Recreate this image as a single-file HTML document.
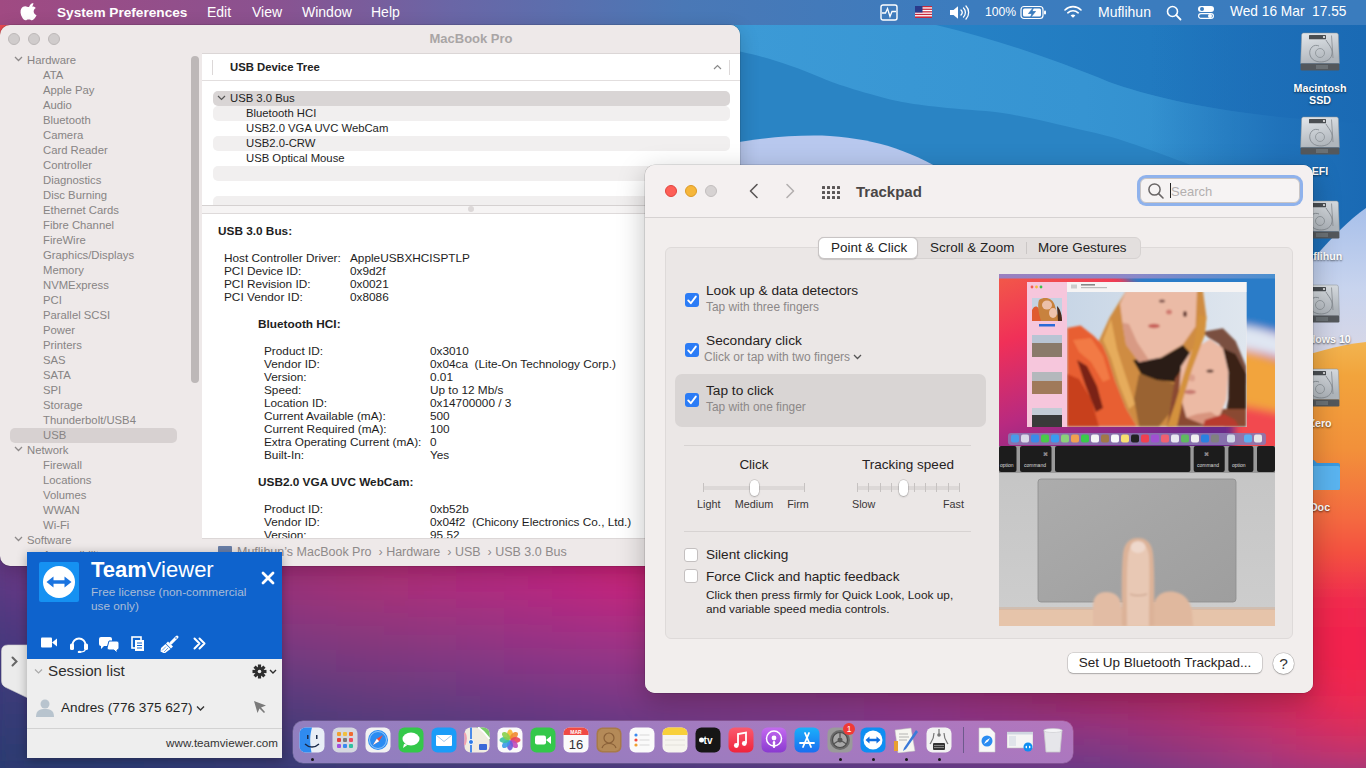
<!DOCTYPE html>
<html><head><meta charset="utf-8">
<style>
*{box-sizing:border-box;margin:0;padding:0}
html,body{width:1366px;height:768px;overflow:hidden}
body{position:relative;font-family:"Liberation Sans",sans-serif;background:#3a3a7a}
.abs{position:absolute}
.t{white-space:nowrap}
#wall{position:absolute;left:0;top:0;width:1366px;height:768px}
#menubar{position:absolute;left:0;top:0;width:1366px;height:25px;background:linear-gradient(90deg,#a04a82 0%,#8a5290 20%,#6a66a6 33%,#4a78b6 50%,#3c7cbe 70%,#3a7cbe 100%);color:#fff;font-size:14px}
#menubar span{position:absolute;top:4px;white-space:nowrap}
#si{position:absolute;left:0px;top:25px;width:740px;height:541px;border-radius:10px;background:#eee9e9;overflow:hidden;box-shadow:0 0 0 0.5px rgba(0,0,0,.2),0 6px 20px rgba(0,0,0,.2)}
#si .it,#si .sec{position:absolute;font-size:11.3px;line-height:14px;color:#878484;white-space:nowrap}
#si .chev{position:absolute}
#si .dt{position:absolute;font-size:11.8px;line-height:14px;color:#1e1e1e;white-space:nowrap}
#si .hd{font-size:11.3px;font-weight:bold;color:#222;line-height:14px}
#si .row{position:absolute;left:211px;width:517px;height:15px;border-radius:5px}
#si .sel{background:#d9d5d5}
#si .str{background:#f1efef}
#si .tr{position:absolute;font-size:11.3px;line-height:14px;color:#1e1e1e;white-space:nowrap}
.tl{position:absolute;width:12px;height:12px;border-radius:6px;background:#d0cccc;border:0.5px solid #bcb8b8}
#tp{position:absolute;left:645px;top:165px;width:668px;height:528px;border-radius:10px;background:#f1eded;overflow:hidden;box-shadow:0 0 0 0.5px rgba(0,0,0,.2),0 8px 28px rgba(0,0,0,.25)}
#tv{position:absolute;left:27px;top:552px;width:255px;height:206px;background:#eeeeee;box-shadow:0 2px 10px rgba(0,0,0,.3)}
#dock{position:absolute;left:293px;top:721px;width:780px;height:42px;border-radius:10px;background:linear-gradient(90deg,rgba(170,150,215,.75),rgba(190,140,210,.75));box-shadow:0 0 0 0.5px rgba(255,255,255,.25)}
.dl{width:120px;text-align:center;font-size:10.7px;font-weight:bold;line-height:14px;color:#fff;text-shadow:0 1px 2px rgba(0,0,0,.6);white-space:nowrap}
</style></head><body>
<svg id="wall" width="1366" height="768" viewBox="0 0 1366 768">
<defs>
<linearGradient id="ws" x1="0" y1="150" x2="0" y2="560" gradientUnits="userSpaceOnUse">
<stop offset="0" stop-color="#1a6cb8"/><stop offset=".12" stop-color="#1e70bc"/><stop offset=".2" stop-color="#a8c0ea"/><stop offset=".3" stop-color="#c8d2ec"/><stop offset=".46" stop-color="#d8d4e0"/><stop offset=".49" stop-color="#f2ac48"/><stop offset=".66" stop-color="#f2a03a"/><stop offset=".8" stop-color="#f47a3a"/><stop offset="1" stop-color="#f45a40"/>
</linearGradient>
<linearGradient id="wdr" x1="1150" y1="0" x2="1366" y2="0" gradientUnits="userSpaceOnUse"><stop offset="0" stop-color="#1c6cb6" stop-opacity="0"/><stop offset=".6" stop-color="#1c6cb6" stop-opacity=".8"/><stop offset="1" stop-color="#1a6ab4"/></linearGradient>
<linearGradient id="wlv" x1="0" y1="208" x2="0" y2="370" gradientUnits="userSpaceOnUse"><stop offset="0" stop-color="#a8c0ea"/><stop offset=".5" stop-color="#c8d4ee"/><stop offset="1" stop-color="#dcd8e4"/></linearGradient>
<linearGradient id="wor" x1="0" y1="342" x2="0" y2="600" gradientUnits="userSpaceOnUse"><stop offset="0" stop-color="#f2b450"/><stop offset=".13" stop-color="#f2a43c"/><stop offset=".42" stop-color="#f2903a"/><stop offset=".68" stop-color="#f46a40"/><stop offset=".82" stop-color="#f45040"/><stop offset="1" stop-color="#f23a4a" stop-opacity="0"/></linearGradient>
<linearGradient id="wtr" x1="936" y1="0" x2="1366" y2="0" gradientUnits="userSpaceOnUse"><stop offset="0" stop-color="#2682c6"/><stop offset="1" stop-color="#1c72ba"/></linearGradient>
<linearGradient id="wlb" x1="740" y1="0" x2="1366" y2="0" gradientUnits="userSpaceOnUse"><stop offset="0" stop-color="#3c9ad6"/><stop offset=".55" stop-color="#3694d2"/><stop offset="1" stop-color="#2c88c8"/></linearGradient>
<filter id="wbl" x="-10%" y="-10%" width="120%" height="120%"><feGaussianBlur stdDeviation="6"/></filter>
<filter id="wgb" x="0" y="0" width="1" height="1"><feGaussianBlur stdDeviation="16"/></filter>
</defs>
<rect width="1366" height="768" fill="#3a3a7a"/>
<g filter="url(#wgb)"><rect x="-24" y="408" width="24" height="24" fill="#7b3886"/><rect x="0" y="408" width="24" height="24" fill="#7e3685"/><rect x="24" y="408" width="24" height="24" fill="#813484"/><rect x="48" y="408" width="24" height="24" fill="#843382"/><rect x="72" y="408" width="24" height="24" fill="#883181"/><rect x="96" y="408" width="24" height="24" fill="#8c2f7f"/><rect x="120" y="408" width="24" height="24" fill="#912e7d"/><rect x="144" y="408" width="24" height="24" fill="#962d7b"/><rect x="168" y="408" width="24" height="24" fill="#9b2c7a"/><rect x="192" y="408" width="24" height="24" fill="#a12b78"/><rect x="216" y="408" width="24" height="24" fill="#a52b76"/><rect x="240" y="408" width="24" height="24" fill="#aa2a75"/><rect x="264" y="408" width="24" height="24" fill="#ae2a73"/><rect x="288" y="408" width="24" height="24" fill="#b22a72"/><rect x="312" y="408" width="24" height="24" fill="#b62a71"/><rect x="336" y="408" width="24" height="24" fill="#b92a70"/><rect x="360" y="408" width="24" height="24" fill="#bc2a70"/><rect x="384" y="408" width="24" height="24" fill="#bf2a6f"/><rect x="408" y="408" width="24" height="24" fill="#c2296f"/><rect x="432" y="408" width="24" height="24" fill="#c5286f"/><rect x="456" y="408" width="24" height="24" fill="#c8276e"/><rect x="480" y="408" width="24" height="24" fill="#ca266e"/><rect x="504" y="408" width="24" height="24" fill="#cc266d"/><rect x="528" y="408" width="24" height="24" fill="#ce256d"/><rect x="552" y="408" width="24" height="24" fill="#cf256c"/><rect x="576" y="408" width="24" height="24" fill="#d0266b"/><rect x="600" y="408" width="24" height="24" fill="#d0266a"/><rect x="624" y="408" width="24" height="24" fill="#d02769"/><rect x="648" y="408" width="24" height="24" fill="#d02868"/><rect x="672" y="408" width="24" height="24" fill="#cf2a68"/><rect x="696" y="408" width="24" height="24" fill="#cf2a67"/><rect x="720" y="408" width="24" height="24" fill="#d12b65"/><rect x="744" y="408" width="24" height="24" fill="#d32c64"/><rect x="768" y="408" width="24" height="24" fill="#d42c62"/><rect x="792" y="408" width="24" height="24" fill="#d62d61"/><rect x="816" y="408" width="24" height="24" fill="#d72e5f"/><rect x="840" y="408" width="24" height="24" fill="#d92f5d"/><rect x="864" y="408" width="24" height="24" fill="#da315b"/><rect x="888" y="408" width="24" height="24" fill="#db3359"/><rect x="912" y="408" width="24" height="24" fill="#dc3656"/><rect x="936" y="408" width="24" height="24" fill="#dd3954"/><rect x="960" y="408" width="24" height="24" fill="#de3d51"/><rect x="984" y="408" width="24" height="24" fill="#df414f"/><rect x="1008" y="408" width="24" height="24" fill="#e1474d"/><rect x="1032" y="408" width="24" height="24" fill="#e44e4a"/><rect x="1056" y="408" width="24" height="24" fill="#e65548"/><rect x="1080" y="408" width="24" height="24" fill="#e85d46"/><rect x="1104" y="408" width="24" height="24" fill="#ea6543"/><rect x="1128" y="408" width="24" height="24" fill="#ec6d41"/><rect x="1152" y="408" width="24" height="24" fill="#ed753f"/><rect x="1176" y="408" width="24" height="24" fill="#ee7c3d"/><rect x="1200" y="408" width="24" height="24" fill="#ef843b"/><rect x="1224" y="408" width="24" height="24" fill="#ef8a39"/><rect x="1248" y="408" width="24" height="24" fill="#ef8f38"/><rect x="1272" y="408" width="24" height="24" fill="#f09138"/><rect x="1296" y="408" width="24" height="24" fill="#f09338"/><rect x="1320" y="408" width="24" height="24" fill="#f19438"/><rect x="1344" y="408" width="24" height="24" fill="#f19439"/><rect x="1368" y="408" width="24" height="24" fill="#f29439"/><rect x="-24" y="432" width="24" height="24" fill="#793886"/><rect x="0" y="432" width="24" height="24" fill="#7c3685"/><rect x="24" y="432" width="24" height="24" fill="#803484"/><rect x="48" y="432" width="24" height="24" fill="#843282"/><rect x="72" y="432" width="24" height="24" fill="#873081"/><rect x="96" y="432" width="24" height="24" fill="#8c2f7f"/><rect x="120" y="432" width="24" height="24" fill="#912d7d"/><rect x="144" y="432" width="24" height="24" fill="#962c7b"/><rect x="168" y="432" width="24" height="24" fill="#9b2b7a"/><rect x="192" y="432" width="24" height="24" fill="#a02b78"/><rect x="216" y="432" width="24" height="24" fill="#a52a76"/><rect x="240" y="432" width="24" height="24" fill="#a92a75"/><rect x="264" y="432" width="24" height="24" fill="#ae2973"/><rect x="288" y="432" width="24" height="24" fill="#b22972"/><rect x="312" y="432" width="24" height="24" fill="#b62971"/><rect x="336" y="432" width="24" height="24" fill="#ba2a70"/><rect x="360" y="432" width="24" height="24" fill="#bd296f"/><rect x="384" y="432" width="24" height="24" fill="#c0296f"/><rect x="408" y="432" width="24" height="24" fill="#c3286f"/><rect x="432" y="432" width="24" height="24" fill="#c6276f"/><rect x="456" y="432" width="24" height="24" fill="#c8266f"/><rect x="480" y="432" width="24" height="24" fill="#cb256f"/><rect x="504" y="432" width="24" height="24" fill="#cd246f"/><rect x="528" y="432" width="24" height="24" fill="#ce246e"/><rect x="552" y="432" width="24" height="24" fill="#d0236d"/><rect x="576" y="432" width="24" height="24" fill="#d1246c"/><rect x="600" y="432" width="24" height="24" fill="#d2256b"/><rect x="624" y="432" width="24" height="24" fill="#d2266a"/><rect x="648" y="432" width="24" height="24" fill="#d22769"/><rect x="672" y="432" width="24" height="24" fill="#d22868"/><rect x="696" y="432" width="24" height="24" fill="#d22967"/><rect x="720" y="432" width="24" height="24" fill="#d32a66"/><rect x="744" y="432" width="24" height="24" fill="#d42a65"/><rect x="768" y="432" width="24" height="24" fill="#d62a64"/><rect x="792" y="432" width="24" height="24" fill="#d72a63"/><rect x="816" y="432" width="24" height="24" fill="#d82b62"/><rect x="840" y="432" width="24" height="24" fill="#da2b60"/><rect x="864" y="432" width="24" height="24" fill="#db2d5e"/><rect x="888" y="432" width="24" height="24" fill="#dc2f5b"/><rect x="912" y="432" width="24" height="24" fill="#dd3159"/><rect x="936" y="432" width="24" height="24" fill="#df3456"/><rect x="960" y="432" width="24" height="24" fill="#e03753"/><rect x="984" y="432" width="24" height="24" fill="#e13c51"/><rect x="1008" y="432" width="24" height="24" fill="#e3414e"/><rect x="1032" y="432" width="24" height="24" fill="#e6474c"/><rect x="1056" y="432" width="24" height="24" fill="#e84e4a"/><rect x="1080" y="432" width="24" height="24" fill="#ea5548"/><rect x="1104" y="432" width="24" height="24" fill="#ec5c46"/><rect x="1128" y="432" width="24" height="24" fill="#ed6344"/><rect x="1152" y="432" width="24" height="24" fill="#ee6b42"/><rect x="1176" y="432" width="24" height="24" fill="#ef7240"/><rect x="1200" y="432" width="24" height="24" fill="#f0783e"/><rect x="1224" y="432" width="24" height="24" fill="#f07e3c"/><rect x="1248" y="432" width="24" height="24" fill="#f0823b"/><rect x="1272" y="432" width="24" height="24" fill="#f1853a"/><rect x="1296" y="432" width="24" height="24" fill="#f1863a"/><rect x="1320" y="432" width="24" height="24" fill="#f18739"/><rect x="1344" y="432" width="24" height="24" fill="#f28839"/><rect x="1368" y="432" width="24" height="24" fill="#f38839"/><rect x="-24" y="456" width="24" height="24" fill="#763887"/><rect x="0" y="456" width="24" height="24" fill="#7b3686"/><rect x="24" y="456" width="24" height="24" fill="#7f3484"/><rect x="48" y="456" width="24" height="24" fill="#843283"/><rect x="72" y="456" width="24" height="24" fill="#883081"/><rect x="96" y="456" width="24" height="24" fill="#8d2e7f"/><rect x="120" y="456" width="24" height="24" fill="#912d7d"/><rect x="144" y="456" width="24" height="24" fill="#962c7c"/><rect x="168" y="456" width="24" height="24" fill="#9b2b7a"/><rect x="192" y="456" width="24" height="24" fill="#9f2a78"/><rect x="216" y="456" width="24" height="24" fill="#a42a77"/><rect x="240" y="456" width="24" height="24" fill="#a82975"/><rect x="264" y="456" width="24" height="24" fill="#ad2973"/><rect x="288" y="456" width="24" height="24" fill="#b12972"/><rect x="312" y="456" width="24" height="24" fill="#b62971"/><rect x="336" y="456" width="24" height="24" fill="#ba2970"/><rect x="360" y="456" width="24" height="24" fill="#be296f"/><rect x="384" y="456" width="24" height="24" fill="#c1296f"/><rect x="408" y="456" width="24" height="24" fill="#c4286f"/><rect x="432" y="456" width="24" height="24" fill="#c6266f"/><rect x="456" y="456" width="24" height="24" fill="#c82570"/><rect x="480" y="456" width="24" height="24" fill="#ca2470"/><rect x="504" y="456" width="24" height="24" fill="#cc2370"/><rect x="528" y="456" width="24" height="24" fill="#ce2270"/><rect x="552" y="456" width="24" height="24" fill="#d0226f"/><rect x="576" y="456" width="24" height="24" fill="#d2226d"/><rect x="600" y="456" width="24" height="24" fill="#d3236c"/><rect x="624" y="456" width="24" height="24" fill="#d4256a"/><rect x="648" y="456" width="24" height="24" fill="#d42669"/><rect x="672" y="456" width="24" height="24" fill="#d52867"/><rect x="696" y="456" width="24" height="24" fill="#d52966"/><rect x="720" y="456" width="24" height="24" fill="#d52966"/><rect x="744" y="456" width="24" height="24" fill="#d62866"/><rect x="768" y="456" width="24" height="24" fill="#d72866"/><rect x="792" y="456" width="24" height="24" fill="#d82865"/><rect x="816" y="456" width="24" height="24" fill="#d92864"/><rect x="840" y="456" width="24" height="24" fill="#da2863"/><rect x="864" y="456" width="24" height="24" fill="#dc2961"/><rect x="888" y="456" width="24" height="24" fill="#dd2b5e"/><rect x="912" y="456" width="24" height="24" fill="#df2d5b"/><rect x="936" y="456" width="24" height="24" fill="#e03058"/><rect x="960" y="456" width="24" height="24" fill="#e23355"/><rect x="984" y="456" width="24" height="24" fill="#e43753"/><rect x="1008" y="456" width="24" height="24" fill="#e63c50"/><rect x="1032" y="456" width="24" height="24" fill="#e8414e"/><rect x="1056" y="456" width="24" height="24" fill="#ea474d"/><rect x="1080" y="456" width="24" height="24" fill="#ec4d4b"/><rect x="1104" y="456" width="24" height="24" fill="#ed5349"/><rect x="1128" y="456" width="24" height="24" fill="#ef5a47"/><rect x="1152" y="456" width="24" height="24" fill="#f06045"/><rect x="1176" y="456" width="24" height="24" fill="#f06744"/><rect x="1200" y="456" width="24" height="24" fill="#f16c42"/><rect x="1224" y="456" width="24" height="24" fill="#f17040"/><rect x="1248" y="456" width="24" height="24" fill="#f1733f"/><rect x="1272" y="456" width="24" height="24" fill="#f1773d"/><rect x="1296" y="456" width="24" height="24" fill="#f2783c"/><rect x="1320" y="456" width="24" height="24" fill="#f27a3b"/><rect x="1344" y="456" width="24" height="24" fill="#f37a3a"/><rect x="1368" y="456" width="24" height="24" fill="#f47b3a"/><rect x="-24" y="480" width="24" height="24" fill="#733987"/><rect x="0" y="480" width="24" height="24" fill="#783786"/><rect x="24" y="480" width="24" height="24" fill="#7d3584"/><rect x="48" y="480" width="24" height="24" fill="#833283"/><rect x="72" y="480" width="24" height="24" fill="#883081"/><rect x="96" y="480" width="24" height="24" fill="#8d2e7f"/><rect x="120" y="480" width="24" height="24" fill="#912d7e"/><rect x="144" y="480" width="24" height="24" fill="#952c7c"/><rect x="168" y="480" width="24" height="24" fill="#992b7b"/><rect x="192" y="480" width="24" height="24" fill="#9d2b79"/><rect x="216" y="480" width="24" height="24" fill="#a22a77"/><rect x="240" y="480" width="24" height="24" fill="#a62975"/><rect x="264" y="480" width="24" height="24" fill="#ab2974"/><rect x="288" y="480" width="24" height="24" fill="#af2972"/><rect x="312" y="480" width="24" height="24" fill="#b42971"/><rect x="336" y="480" width="24" height="24" fill="#b92970"/><rect x="360" y="480" width="24" height="24" fill="#bd296f"/><rect x="384" y="480" width="24" height="24" fill="#c1296f"/><rect x="408" y="480" width="24" height="24" fill="#c4286f"/><rect x="432" y="480" width="24" height="24" fill="#c52670"/><rect x="456" y="480" width="24" height="24" fill="#c72571"/><rect x="480" y="480" width="24" height="24" fill="#c82372"/><rect x="504" y="480" width="24" height="24" fill="#ca2272"/><rect x="528" y="480" width="24" height="24" fill="#cd2172"/><rect x="552" y="480" width="24" height="24" fill="#cf2171"/><rect x="576" y="480" width="24" height="24" fill="#d1216f"/><rect x="600" y="480" width="24" height="24" fill="#d3226d"/><rect x="624" y="480" width="24" height="24" fill="#d5246b"/><rect x="648" y="480" width="24" height="24" fill="#d62669"/><rect x="672" y="480" width="24" height="24" fill="#d72867"/><rect x="696" y="480" width="24" height="24" fill="#d72966"/><rect x="720" y="480" width="24" height="24" fill="#d72967"/><rect x="744" y="480" width="24" height="24" fill="#d72867"/><rect x="768" y="480" width="24" height="24" fill="#d72668"/><rect x="792" y="480" width="24" height="24" fill="#d82668"/><rect x="816" y="480" width="24" height="24" fill="#d82568"/><rect x="840" y="480" width="24" height="24" fill="#da2666"/><rect x="864" y="480" width="24" height="24" fill="#db2764"/><rect x="888" y="480" width="24" height="24" fill="#dd2862"/><rect x="912" y="480" width="24" height="24" fill="#df2a5f"/><rect x="936" y="480" width="24" height="24" fill="#e22c5b"/><rect x="960" y="480" width="24" height="24" fill="#e42f58"/><rect x="984" y="480" width="24" height="24" fill="#e63355"/><rect x="1008" y="480" width="24" height="24" fill="#e83752"/><rect x="1032" y="480" width="24" height="24" fill="#ea3b51"/><rect x="1056" y="480" width="24" height="24" fill="#eb4050"/><rect x="1080" y="480" width="24" height="24" fill="#ed454e"/><rect x="1104" y="480" width="24" height="24" fill="#ee4b4c"/><rect x="1128" y="480" width="24" height="24" fill="#ef504b"/><rect x="1152" y="480" width="24" height="24" fill="#f05649"/><rect x="1176" y="480" width="24" height="24" fill="#f15b47"/><rect x="1200" y="480" width="24" height="24" fill="#f16045"/><rect x="1224" y="480" width="24" height="24" fill="#f26444"/><rect x="1248" y="480" width="24" height="24" fill="#f26742"/><rect x="1272" y="480" width="24" height="24" fill="#f26941"/><rect x="1296" y="480" width="24" height="24" fill="#f26a3f"/><rect x="1320" y="480" width="24" height="24" fill="#f36b3d"/><rect x="1344" y="480" width="24" height="24" fill="#f36b3c"/><rect x="1368" y="480" width="24" height="24" fill="#f46c3c"/><rect x="-24" y="504" width="24" height="24" fill="#6f3987"/><rect x="0" y="504" width="24" height="24" fill="#753886"/><rect x="24" y="504" width="24" height="24" fill="#7a3585"/><rect x="48" y="504" width="24" height="24" fill="#803383"/><rect x="72" y="504" width="24" height="24" fill="#863181"/><rect x="96" y="504" width="24" height="24" fill="#8b2f7f"/><rect x="120" y="504" width="24" height="24" fill="#8f2e7e"/><rect x="144" y="504" width="24" height="24" fill="#932d7d"/><rect x="168" y="504" width="24" height="24" fill="#972c7b"/><rect x="192" y="504" width="24" height="24" fill="#9a2b7a"/><rect x="216" y="504" width="24" height="24" fill="#9e2b78"/><rect x="240" y="504" width="24" height="24" fill="#a32a76"/><rect x="264" y="504" width="24" height="24" fill="#a72a74"/><rect x="288" y="504" width="24" height="24" fill="#ac2a73"/><rect x="312" y="504" width="24" height="24" fill="#b12a72"/><rect x="336" y="504" width="24" height="24" fill="#b62a71"/><rect x="360" y="504" width="24" height="24" fill="#bb2a70"/><rect x="384" y="504" width="24" height="24" fill="#bf296f"/><rect x="408" y="504" width="24" height="24" fill="#c12871"/><rect x="432" y="504" width="24" height="24" fill="#c22672"/><rect x="456" y="504" width="24" height="24" fill="#c32574"/><rect x="480" y="504" width="24" height="24" fill="#c52475"/><rect x="504" y="504" width="24" height="24" fill="#c72275"/><rect x="528" y="504" width="24" height="24" fill="#c92174"/><rect x="552" y="504" width="24" height="24" fill="#cc2173"/><rect x="576" y="504" width="24" height="24" fill="#cf2072"/><rect x="600" y="504" width="24" height="24" fill="#d22170"/><rect x="624" y="504" width="24" height="24" fill="#d4236d"/><rect x="648" y="504" width="24" height="24" fill="#d5256b"/><rect x="672" y="504" width="24" height="24" fill="#d72868"/><rect x="696" y="504" width="24" height="24" fill="#d72968"/><rect x="720" y="504" width="24" height="24" fill="#d72869"/><rect x="744" y="504" width="24" height="24" fill="#d6276a"/><rect x="768" y="504" width="24" height="24" fill="#d6256b"/><rect x="792" y="504" width="24" height="24" fill="#d6246c"/><rect x="816" y="504" width="24" height="24" fill="#d7246c"/><rect x="840" y="504" width="24" height="24" fill="#d8246a"/><rect x="864" y="504" width="24" height="24" fill="#da2569"/><rect x="888" y="504" width="24" height="24" fill="#dc2666"/><rect x="912" y="504" width="24" height="24" fill="#df2763"/><rect x="936" y="504" width="24" height="24" fill="#e12a5f"/><rect x="960" y="504" width="24" height="24" fill="#e42c5b"/><rect x="984" y="504" width="24" height="24" fill="#e72f58"/><rect x="1008" y="504" width="24" height="24" fill="#e93356"/><rect x="1032" y="504" width="24" height="24" fill="#ea3654"/><rect x="1056" y="504" width="24" height="24" fill="#ec3a53"/><rect x="1080" y="504" width="24" height="24" fill="#ed3e52"/><rect x="1104" y="504" width="24" height="24" fill="#ee4250"/><rect x="1128" y="504" width="24" height="24" fill="#ef474e"/><rect x="1152" y="504" width="24" height="24" fill="#f04c4c"/><rect x="1176" y="504" width="24" height="24" fill="#f1504b"/><rect x="1200" y="504" width="24" height="24" fill="#f15549"/><rect x="1224" y="504" width="24" height="24" fill="#f25948"/><rect x="1248" y="504" width="24" height="24" fill="#f25b46"/><rect x="1272" y="504" width="24" height="24" fill="#f25b44"/><rect x="1296" y="504" width="24" height="24" fill="#f35b43"/><rect x="1320" y="504" width="24" height="24" fill="#f35b41"/><rect x="1344" y="504" width="24" height="24" fill="#f35c3f"/><rect x="1368" y="504" width="24" height="24" fill="#f45c3f"/><rect x="-24" y="528" width="24" height="24" fill="#6a3a86"/><rect x="0" y="528" width="24" height="24" fill="#703986"/><rect x="24" y="528" width="24" height="24" fill="#753684"/><rect x="48" y="528" width="24" height="24" fill="#7b3483"/><rect x="72" y="528" width="24" height="24" fill="#813281"/><rect x="96" y="528" width="24" height="24" fill="#863080"/><rect x="120" y="528" width="24" height="24" fill="#8b2f7f"/><rect x="144" y="528" width="24" height="24" fill="#8e2e7d"/><rect x="168" y="528" width="24" height="24" fill="#922e7c"/><rect x="192" y="528" width="24" height="24" fill="#962d7b"/><rect x="216" y="528" width="24" height="24" fill="#992c79"/><rect x="240" y="528" width="24" height="24" fill="#9d2b77"/><rect x="264" y="528" width="24" height="24" fill="#a22b76"/><rect x="288" y="528" width="24" height="24" fill="#a72b74"/><rect x="312" y="528" width="24" height="24" fill="#ab2b73"/><rect x="336" y="528" width="24" height="24" fill="#b12b72"/><rect x="360" y="528" width="24" height="24" fill="#b52b72"/><rect x="384" y="528" width="24" height="24" fill="#b92b72"/><rect x="408" y="528" width="24" height="24" fill="#bb2973"/><rect x="432" y="528" width="24" height="24" fill="#bc2875"/><rect x="456" y="528" width="24" height="24" fill="#bd2677"/><rect x="480" y="528" width="24" height="24" fill="#bf2578"/><rect x="504" y="528" width="24" height="24" fill="#c12378"/><rect x="528" y="528" width="24" height="24" fill="#c42278"/><rect x="552" y="528" width="24" height="24" fill="#c72177"/><rect x="576" y="528" width="24" height="24" fill="#cb2175"/><rect x="600" y="528" width="24" height="24" fill="#ce2173"/><rect x="624" y="528" width="24" height="24" fill="#d02271"/><rect x="648" y="528" width="24" height="24" fill="#d2256e"/><rect x="672" y="528" width="24" height="24" fill="#d3286c"/><rect x="696" y="528" width="24" height="24" fill="#d4296c"/><rect x="720" y="528" width="24" height="24" fill="#d3286d"/><rect x="744" y="528" width="24" height="24" fill="#d2276e"/><rect x="768" y="528" width="24" height="24" fill="#d22570"/><rect x="792" y="528" width="24" height="24" fill="#d22371"/><rect x="816" y="528" width="24" height="24" fill="#d32370"/><rect x="840" y="528" width="24" height="24" fill="#d5236f"/><rect x="864" y="528" width="24" height="24" fill="#d7246d"/><rect x="888" y="528" width="24" height="24" fill="#d9246b"/><rect x="912" y="528" width="24" height="24" fill="#dc2667"/><rect x="936" y="528" width="24" height="24" fill="#df2764"/><rect x="960" y="528" width="24" height="24" fill="#e22960"/><rect x="984" y="528" width="24" height="24" fill="#e52c5c"/><rect x="1008" y="528" width="24" height="24" fill="#e72e5a"/><rect x="1032" y="528" width="24" height="24" fill="#e93159"/><rect x="1056" y="528" width="24" height="24" fill="#ea3457"/><rect x="1080" y="528" width="24" height="24" fill="#ec3756"/><rect x="1104" y="528" width="24" height="24" fill="#ed3a54"/><rect x="1128" y="528" width="24" height="24" fill="#ee3e52"/><rect x="1152" y="528" width="24" height="24" fill="#ef4150"/><rect x="1176" y="528" width="24" height="24" fill="#f0454e"/><rect x="1200" y="528" width="24" height="24" fill="#f1484c"/><rect x="1224" y="528" width="24" height="24" fill="#f24b4b"/><rect x="1248" y="528" width="24" height="24" fill="#f24c49"/><rect x="1272" y="528" width="24" height="24" fill="#f24c48"/><rect x="1296" y="528" width="24" height="24" fill="#f24b46"/><rect x="1320" y="528" width="24" height="24" fill="#f24b45"/><rect x="1344" y="528" width="24" height="24" fill="#f24b44"/><rect x="1368" y="528" width="24" height="24" fill="#f34d44"/><rect x="-24" y="552" width="24" height="24" fill="#623a85"/><rect x="0" y="552" width="24" height="24" fill="#683985"/><rect x="24" y="552" width="24" height="24" fill="#6e3784"/><rect x="48" y="552" width="24" height="24" fill="#733582"/><rect x="72" y="552" width="24" height="24" fill="#793481"/><rect x="96" y="552" width="24" height="24" fill="#7f3280"/><rect x="120" y="552" width="24" height="24" fill="#84317f"/><rect x="144" y="552" width="24" height="24" fill="#88307e"/><rect x="168" y="552" width="24" height="24" fill="#8c2f7d"/><rect x="192" y="552" width="24" height="24" fill="#8f2f7c"/><rect x="216" y="552" width="24" height="24" fill="#932e7b"/><rect x="240" y="552" width="24" height="24" fill="#972d79"/><rect x="264" y="552" width="24" height="24" fill="#9b2d77"/><rect x="288" y="552" width="24" height="24" fill="#9f2d76"/><rect x="312" y="552" width="24" height="24" fill="#a42d76"/><rect x="336" y="552" width="24" height="24" fill="#a92e75"/><rect x="360" y="552" width="24" height="24" fill="#ad2d75"/><rect x="384" y="552" width="24" height="24" fill="#b02d76"/><rect x="408" y="552" width="24" height="24" fill="#b22b77"/><rect x="432" y="552" width="24" height="24" fill="#b32a79"/><rect x="456" y="552" width="24" height="24" fill="#b5287a"/><rect x="480" y="552" width="24" height="24" fill="#b7277b"/><rect x="504" y="552" width="24" height="24" fill="#ba267b"/><rect x="528" y="552" width="24" height="24" fill="#bd257b"/><rect x="552" y="552" width="24" height="24" fill="#c0237a"/><rect x="576" y="552" width="24" height="24" fill="#c42279"/><rect x="600" y="552" width="24" height="24" fill="#c72277"/><rect x="624" y="552" width="24" height="24" fill="#ca2375"/><rect x="648" y="552" width="24" height="24" fill="#cb2673"/><rect x="672" y="552" width="24" height="24" fill="#cc2872"/><rect x="696" y="552" width="24" height="24" fill="#cd2971"/><rect x="720" y="552" width="24" height="24" fill="#cd2972"/><rect x="744" y="552" width="24" height="24" fill="#cc2774"/><rect x="768" y="552" width="24" height="24" fill="#cc2575"/><rect x="792" y="552" width="24" height="24" fill="#cd2476"/><rect x="816" y="552" width="24" height="24" fill="#ce2376"/><rect x="840" y="552" width="24" height="24" fill="#cf2374"/><rect x="864" y="552" width="24" height="24" fill="#d22472"/><rect x="888" y="552" width="24" height="24" fill="#d42470"/><rect x="912" y="552" width="24" height="24" fill="#d7256d"/><rect x="936" y="552" width="24" height="24" fill="#da2669"/><rect x="960" y="552" width="24" height="24" fill="#dd2765"/><rect x="984" y="552" width="24" height="24" fill="#e02962"/><rect x="1008" y="552" width="24" height="24" fill="#e32b5f"/><rect x="1032" y="552" width="24" height="24" fill="#e52d5d"/><rect x="1056" y="552" width="24" height="24" fill="#e62e5c"/><rect x="1080" y="552" width="24" height="24" fill="#e8315a"/><rect x="1104" y="552" width="24" height="24" fill="#ea3358"/><rect x="1128" y="552" width="24" height="24" fill="#eb3556"/><rect x="1152" y="552" width="24" height="24" fill="#ed3853"/><rect x="1176" y="552" width="24" height="24" fill="#ee3a51"/><rect x="1200" y="552" width="24" height="24" fill="#f03b4f"/><rect x="1224" y="552" width="24" height="24" fill="#f13c4d"/><rect x="1248" y="552" width="24" height="24" fill="#f23d4c"/><rect x="1272" y="552" width="24" height="24" fill="#f23d4b"/><rect x="1296" y="552" width="24" height="24" fill="#f23c4a"/><rect x="1320" y="552" width="24" height="24" fill="#f23c49"/><rect x="1344" y="552" width="24" height="24" fill="#f13c49"/><rect x="1368" y="552" width="24" height="24" fill="#f23e49"/><rect x="-24" y="576" width="24" height="24" fill="#593b83"/><rect x="0" y="576" width="24" height="24" fill="#5e3983"/><rect x="24" y="576" width="24" height="24" fill="#643882"/><rect x="48" y="576" width="24" height="24" fill="#6a3681"/><rect x="72" y="576" width="24" height="24" fill="#703581"/><rect x="96" y="576" width="24" height="24" fill="#763480"/><rect x="120" y="576" width="24" height="24" fill="#7b3380"/><rect x="144" y="576" width="24" height="24" fill="#7f327f"/><rect x="168" y="576" width="24" height="24" fill="#83327e"/><rect x="192" y="576" width="24" height="24" fill="#87317d"/><rect x="216" y="576" width="24" height="24" fill="#8a317c"/><rect x="240" y="576" width="24" height="24" fill="#8e317b"/><rect x="264" y="576" width="24" height="24" fill="#92307a"/><rect x="288" y="576" width="24" height="24" fill="#973079"/><rect x="312" y="576" width="24" height="24" fill="#9b3079"/><rect x="336" y="576" width="24" height="24" fill="#9f3178"/><rect x="360" y="576" width="24" height="24" fill="#a23078"/><rect x="384" y="576" width="24" height="24" fill="#a53079"/><rect x="408" y="576" width="24" height="24" fill="#a72f7a"/><rect x="432" y="576" width="24" height="24" fill="#a92d7c"/><rect x="456" y="576" width="24" height="24" fill="#ab2c7d"/><rect x="480" y="576" width="24" height="24" fill="#ad2b7e"/><rect x="504" y="576" width="24" height="24" fill="#b02a7f"/><rect x="528" y="576" width="24" height="24" fill="#b3287f"/><rect x="552" y="576" width="24" height="24" fill="#b6277e"/><rect x="576" y="576" width="24" height="24" fill="#ba267d"/><rect x="600" y="576" width="24" height="24" fill="#be257c"/><rect x="624" y="576" width="24" height="24" fill="#c0267b"/><rect x="648" y="576" width="24" height="24" fill="#c22979"/><rect x="672" y="576" width="24" height="24" fill="#c32a78"/><rect x="696" y="576" width="24" height="24" fill="#c32b77"/><rect x="720" y="576" width="24" height="24" fill="#c42b78"/><rect x="744" y="576" width="24" height="24" fill="#c42979"/><rect x="768" y="576" width="24" height="24" fill="#c4287a"/><rect x="792" y="576" width="24" height="24" fill="#c5267b"/><rect x="816" y="576" width="24" height="24" fill="#c6267b"/><rect x="840" y="576" width="24" height="24" fill="#c8267a"/><rect x="864" y="576" width="24" height="24" fill="#ca2578"/><rect x="888" y="576" width="24" height="24" fill="#cd2575"/><rect x="912" y="576" width="24" height="24" fill="#d02572"/><rect x="936" y="576" width="24" height="24" fill="#d4256f"/><rect x="960" y="576" width="24" height="24" fill="#d6266b"/><rect x="984" y="576" width="24" height="24" fill="#d92768"/><rect x="1008" y="576" width="24" height="24" fill="#dc2865"/><rect x="1032" y="576" width="24" height="24" fill="#de2962"/><rect x="1056" y="576" width="24" height="24" fill="#e02a60"/><rect x="1080" y="576" width="24" height="24" fill="#e22b5e"/><rect x="1104" y="576" width="24" height="24" fill="#e42d5c"/><rect x="1128" y="576" width="24" height="24" fill="#e62e59"/><rect x="1152" y="576" width="24" height="24" fill="#e82f56"/><rect x="1176" y="576" width="24" height="24" fill="#ea3053"/><rect x="1200" y="576" width="24" height="24" fill="#ed3051"/><rect x="1224" y="576" width="24" height="24" fill="#ef304f"/><rect x="1248" y="576" width="24" height="24" fill="#f12f4e"/><rect x="1272" y="576" width="24" height="24" fill="#f22f4d"/><rect x="1296" y="576" width="24" height="24" fill="#f22f4c"/><rect x="1320" y="576" width="24" height="24" fill="#f12f4d"/><rect x="1344" y="576" width="24" height="24" fill="#f02f4d"/><rect x="1368" y="576" width="24" height="24" fill="#f1314d"/><rect x="-24" y="600" width="24" height="24" fill="#503a81"/><rect x="0" y="600" width="24" height="24" fill="#543980"/><rect x="24" y="600" width="24" height="24" fill="#593880"/><rect x="48" y="600" width="24" height="24" fill="#5f3780"/><rect x="72" y="600" width="24" height="24" fill="#653680"/><rect x="96" y="600" width="24" height="24" fill="#6b357f"/><rect x="120" y="600" width="24" height="24" fill="#70357f"/><rect x="144" y="600" width="24" height="24" fill="#75347f"/><rect x="168" y="600" width="24" height="24" fill="#78347f"/><rect x="192" y="600" width="24" height="24" fill="#7c347e"/><rect x="216" y="600" width="24" height="24" fill="#80347e"/><rect x="240" y="600" width="24" height="24" fill="#84347d"/><rect x="264" y="600" width="24" height="24" fill="#89347d"/><rect x="288" y="600" width="24" height="24" fill="#8d357c"/><rect x="312" y="600" width="24" height="24" fill="#90347c"/><rect x="336" y="600" width="24" height="24" fill="#93347b"/><rect x="360" y="600" width="24" height="24" fill="#96347b"/><rect x="384" y="600" width="24" height="24" fill="#99337c"/><rect x="408" y="600" width="24" height="24" fill="#9b337d"/><rect x="432" y="600" width="24" height="24" fill="#9d327f"/><rect x="456" y="600" width="24" height="24" fill="#9f3180"/><rect x="480" y="600" width="24" height="24" fill="#a23081"/><rect x="504" y="600" width="24" height="24" fill="#a42e81"/><rect x="528" y="600" width="24" height="24" fill="#a72d82"/><rect x="552" y="600" width="24" height="24" fill="#aa2c82"/><rect x="576" y="600" width="24" height="24" fill="#ad2c82"/><rect x="600" y="600" width="24" height="24" fill="#b02c81"/><rect x="624" y="600" width="24" height="24" fill="#b32c80"/><rect x="648" y="600" width="24" height="24" fill="#b52d7e"/><rect x="672" y="600" width="24" height="24" fill="#b62e7d"/><rect x="696" y="600" width="24" height="24" fill="#b82e7d"/><rect x="720" y="600" width="24" height="24" fill="#b82e7d"/><rect x="744" y="600" width="24" height="24" fill="#b92d7e"/><rect x="768" y="600" width="24" height="24" fill="#ba2c7f"/><rect x="792" y="600" width="24" height="24" fill="#bb2b80"/><rect x="816" y="600" width="24" height="24" fill="#bd2a7f"/><rect x="840" y="600" width="24" height="24" fill="#bf297e"/><rect x="864" y="600" width="24" height="24" fill="#c1287c"/><rect x="888" y="600" width="24" height="24" fill="#c4287a"/><rect x="912" y="600" width="24" height="24" fill="#c72778"/><rect x="936" y="600" width="24" height="24" fill="#ca2774"/><rect x="960" y="600" width="24" height="24" fill="#cd2771"/><rect x="984" y="600" width="24" height="24" fill="#d0276d"/><rect x="1008" y="600" width="24" height="24" fill="#d22769"/><rect x="1032" y="600" width="24" height="24" fill="#d52766"/><rect x="1056" y="600" width="24" height="24" fill="#d72763"/><rect x="1080" y="600" width="24" height="24" fill="#da2861"/><rect x="1104" y="600" width="24" height="24" fill="#dc285e"/><rect x="1128" y="600" width="24" height="24" fill="#df295b"/><rect x="1152" y="600" width="24" height="24" fill="#e12958"/><rect x="1176" y="600" width="24" height="24" fill="#e42955"/><rect x="1200" y="600" width="24" height="24" fill="#e72953"/><rect x="1224" y="600" width="24" height="24" fill="#eb2751"/><rect x="1248" y="600" width="24" height="24" fill="#ee264f"/><rect x="1272" y="600" width="24" height="24" fill="#ef274e"/><rect x="1296" y="600" width="24" height="24" fill="#f1264d"/><rect x="1320" y="600" width="24" height="24" fill="#f1264e"/><rect x="1344" y="600" width="24" height="24" fill="#f1264f"/><rect x="1368" y="600" width="24" height="24" fill="#f2294e"/><rect x="-24" y="624" width="24" height="24" fill="#483a7e"/><rect x="0" y="624" width="24" height="24" fill="#4b397e"/><rect x="24" y="624" width="24" height="24" fill="#50397e"/><rect x="48" y="624" width="24" height="24" fill="#55387e"/><rect x="72" y="624" width="24" height="24" fill="#5b377e"/><rect x="96" y="624" width="24" height="24" fill="#5f377e"/><rect x="120" y="624" width="24" height="24" fill="#64367e"/><rect x="144" y="624" width="24" height="24" fill="#68367e"/><rect x="168" y="624" width="24" height="24" fill="#6c367e"/><rect x="192" y="624" width="24" height="24" fill="#70367e"/><rect x="216" y="624" width="24" height="24" fill="#74377e"/><rect x="240" y="624" width="24" height="24" fill="#78377e"/><rect x="264" y="624" width="24" height="24" fill="#7d387f"/><rect x="288" y="624" width="24" height="24" fill="#81387f"/><rect x="312" y="624" width="24" height="24" fill="#84387e"/><rect x="336" y="624" width="24" height="24" fill="#86377d"/><rect x="360" y="624" width="24" height="24" fill="#89377d"/><rect x="384" y="624" width="24" height="24" fill="#8b377e"/><rect x="408" y="624" width="24" height="24" fill="#8e377f"/><rect x="432" y="624" width="24" height="24" fill="#903780"/><rect x="456" y="624" width="24" height="24" fill="#923682"/><rect x="480" y="624" width="24" height="24" fill="#943482"/><rect x="504" y="624" width="24" height="24" fill="#973383"/><rect x="528" y="624" width="24" height="24" fill="#993284"/><rect x="552" y="624" width="24" height="24" fill="#9c3184"/><rect x="576" y="624" width="24" height="24" fill="#9f3185"/><rect x="600" y="624" width="24" height="24" fill="#a13285"/><rect x="624" y="624" width="24" height="24" fill="#a43284"/><rect x="648" y="624" width="24" height="24" fill="#a63283"/><rect x="672" y="624" width="24" height="24" fill="#a83281"/><rect x="696" y="624" width="24" height="24" fill="#aa3281"/><rect x="720" y="624" width="24" height="24" fill="#ab3181"/><rect x="744" y="624" width="24" height="24" fill="#ac3182"/><rect x="768" y="624" width="24" height="24" fill="#ae3183"/><rect x="792" y="624" width="24" height="24" fill="#af3084"/><rect x="816" y="624" width="24" height="24" fill="#b12f83"/><rect x="840" y="624" width="24" height="24" fill="#b32d82"/><rect x="864" y="624" width="24" height="24" fill="#b62c81"/><rect x="888" y="624" width="24" height="24" fill="#b92b7f"/><rect x="912" y="624" width="24" height="24" fill="#bc2a7c"/><rect x="936" y="624" width="24" height="24" fill="#bf297a"/><rect x="960" y="624" width="24" height="24" fill="#c12976"/><rect x="984" y="624" width="24" height="24" fill="#c42872"/><rect x="1008" y="624" width="24" height="24" fill="#c7286e"/><rect x="1032" y="624" width="24" height="24" fill="#c9276a"/><rect x="1056" y="624" width="24" height="24" fill="#cc2666"/><rect x="1080" y="624" width="24" height="24" fill="#cf2663"/><rect x="1104" y="624" width="24" height="24" fill="#d12660"/><rect x="1128" y="624" width="24" height="24" fill="#d4265d"/><rect x="1152" y="624" width="24" height="24" fill="#d7265a"/><rect x="1176" y="624" width="24" height="24" fill="#db2658"/><rect x="1200" y="624" width="24" height="24" fill="#df2555"/><rect x="1224" y="624" width="24" height="24" fill="#e32452"/><rect x="1248" y="624" width="24" height="24" fill="#e82350"/><rect x="1272" y="624" width="24" height="24" fill="#eb234e"/><rect x="1296" y="624" width="24" height="24" fill="#ef224e"/><rect x="1320" y="624" width="24" height="24" fill="#f1234e"/><rect x="1344" y="624" width="24" height="24" fill="#f3234e"/><rect x="1368" y="624" width="24" height="24" fill="#f4264e"/><rect x="-24" y="648" width="24" height="24" fill="#413a7c"/><rect x="0" y="648" width="24" height="24" fill="#443a7c"/><rect x="24" y="648" width="24" height="24" fill="#48397c"/><rect x="48" y="648" width="24" height="24" fill="#4c397c"/><rect x="72" y="648" width="24" height="24" fill="#50387c"/><rect x="96" y="648" width="24" height="24" fill="#54387c"/><rect x="120" y="648" width="24" height="24" fill="#58387d"/><rect x="144" y="648" width="24" height="24" fill="#5b387d"/><rect x="168" y="648" width="24" height="24" fill="#5f387d"/><rect x="192" y="648" width="24" height="24" fill="#63387d"/><rect x="216" y="648" width="24" height="24" fill="#67397e"/><rect x="240" y="648" width="24" height="24" fill="#6b397e"/><rect x="264" y="648" width="24" height="24" fill="#6f3a7f"/><rect x="288" y="648" width="24" height="24" fill="#723a7f"/><rect x="312" y="648" width="24" height="24" fill="#753a7e"/><rect x="336" y="648" width="24" height="24" fill="#78397e"/><rect x="360" y="648" width="24" height="24" fill="#7a397e"/><rect x="384" y="648" width="24" height="24" fill="#7d397f"/><rect x="408" y="648" width="24" height="24" fill="#7f3980"/><rect x="432" y="648" width="24" height="24" fill="#813981"/><rect x="456" y="648" width="24" height="24" fill="#833982"/><rect x="480" y="648" width="24" height="24" fill="#853783"/><rect x="504" y="648" width="24" height="24" fill="#883684"/><rect x="528" y="648" width="24" height="24" fill="#8a3585"/><rect x="552" y="648" width="24" height="24" fill="#8d3585"/><rect x="576" y="648" width="24" height="24" fill="#8f3586"/><rect x="600" y="648" width="24" height="24" fill="#923686"/><rect x="624" y="648" width="24" height="24" fill="#943686"/><rect x="648" y="648" width="24" height="24" fill="#973585"/><rect x="672" y="648" width="24" height="24" fill="#993584"/><rect x="696" y="648" width="24" height="24" fill="#9b3584"/><rect x="720" y="648" width="24" height="24" fill="#9c3584"/><rect x="744" y="648" width="24" height="24" fill="#9e3585"/><rect x="768" y="648" width="24" height="24" fill="#a03586"/><rect x="792" y="648" width="24" height="24" fill="#a13586"/><rect x="816" y="648" width="24" height="24" fill="#a33386"/><rect x="840" y="648" width="24" height="24" fill="#a63185"/><rect x="864" y="648" width="24" height="24" fill="#a83084"/><rect x="888" y="648" width="24" height="24" fill="#ab2f82"/><rect x="912" y="648" width="24" height="24" fill="#ae2e80"/><rect x="936" y="648" width="24" height="24" fill="#b12d7e"/><rect x="960" y="648" width="24" height="24" fill="#b42c7b"/><rect x="984" y="648" width="24" height="24" fill="#b62b77"/><rect x="1008" y="648" width="24" height="24" fill="#b92a73"/><rect x="1032" y="648" width="24" height="24" fill="#bb286e"/><rect x="1056" y="648" width="24" height="24" fill="#be2769"/><rect x="1080" y="648" width="24" height="24" fill="#c12665"/><rect x="1104" y="648" width="24" height="24" fill="#c42562"/><rect x="1128" y="648" width="24" height="24" fill="#c82660"/><rect x="1152" y="648" width="24" height="24" fill="#cb265e"/><rect x="1176" y="648" width="24" height="24" fill="#d0265b"/><rect x="1200" y="648" width="24" height="24" fill="#d42558"/><rect x="1224" y="648" width="24" height="24" fill="#d92454"/><rect x="1248" y="648" width="24" height="24" fill="#df2352"/><rect x="1272" y="648" width="24" height="24" fill="#e52350"/><rect x="1296" y="648" width="24" height="24" fill="#eb224f"/><rect x="1320" y="648" width="24" height="24" fill="#f0234e"/><rect x="1344" y="648" width="24" height="24" fill="#f4244d"/><rect x="1368" y="648" width="24" height="24" fill="#f5264d"/><rect x="-24" y="672" width="24" height="24" fill="#3b3a79"/><rect x="0" y="672" width="24" height="24" fill="#3e3a79"/><rect x="24" y="672" width="24" height="24" fill="#413979"/><rect x="48" y="672" width="24" height="24" fill="#443979"/><rect x="72" y="672" width="24" height="24" fill="#46397a"/><rect x="96" y="672" width="24" height="24" fill="#49397a"/><rect x="120" y="672" width="24" height="24" fill="#4c397b"/><rect x="144" y="672" width="24" height="24" fill="#4e397b"/><rect x="168" y="672" width="24" height="24" fill="#52397b"/><rect x="192" y="672" width="24" height="24" fill="#56397c"/><rect x="216" y="672" width="24" height="24" fill="#59397c"/><rect x="240" y="672" width="24" height="24" fill="#5c3a7c"/><rect x="264" y="672" width="24" height="24" fill="#5f3a7d"/><rect x="288" y="672" width="24" height="24" fill="#623a7d"/><rect x="312" y="672" width="24" height="24" fill="#663a7d"/><rect x="336" y="672" width="24" height="24" fill="#693a7d"/><rect x="360" y="672" width="24" height="24" fill="#6c3a7e"/><rect x="384" y="672" width="24" height="24" fill="#6e3a7e"/><rect x="408" y="672" width="24" height="24" fill="#6f3a80"/><rect x="432" y="672" width="24" height="24" fill="#713a81"/><rect x="456" y="672" width="24" height="24" fill="#733982"/><rect x="480" y="672" width="24" height="24" fill="#753983"/><rect x="504" y="672" width="24" height="24" fill="#783883"/><rect x="528" y="672" width="24" height="24" fill="#7a3884"/><rect x="552" y="672" width="24" height="24" fill="#7d3885"/><rect x="576" y="672" width="24" height="24" fill="#7f3885"/><rect x="600" y="672" width="24" height="24" fill="#823886"/><rect x="624" y="672" width="24" height="24" fill="#843886"/><rect x="648" y="672" width="24" height="24" fill="#873885"/><rect x="672" y="672" width="24" height="24" fill="#893885"/><rect x="696" y="672" width="24" height="24" fill="#8b3784"/><rect x="720" y="672" width="24" height="24" fill="#8c3785"/><rect x="744" y="672" width="24" height="24" fill="#8e3886"/><rect x="768" y="672" width="24" height="24" fill="#903886"/><rect x="792" y="672" width="24" height="24" fill="#913787"/><rect x="816" y="672" width="24" height="24" fill="#943687"/><rect x="840" y="672" width="24" height="24" fill="#963586"/><rect x="864" y="672" width="24" height="24" fill="#993385"/><rect x="888" y="672" width="24" height="24" fill="#9c3284"/><rect x="912" y="672" width="24" height="24" fill="#9f3283"/><rect x="936" y="672" width="24" height="24" fill="#a23182"/><rect x="960" y="672" width="24" height="24" fill="#a5307f"/><rect x="984" y="672" width="24" height="24" fill="#a72e7b"/><rect x="1008" y="672" width="24" height="24" fill="#a92d77"/><rect x="1032" y="672" width="24" height="24" fill="#ac2b73"/><rect x="1056" y="672" width="24" height="24" fill="#ae296e"/><rect x="1080" y="672" width="24" height="24" fill="#b22869"/><rect x="1104" y="672" width="24" height="24" fill="#b52767"/><rect x="1128" y="672" width="24" height="24" fill="#b92866"/><rect x="1152" y="672" width="24" height="24" fill="#bd2865"/><rect x="1176" y="672" width="24" height="24" fill="#c22862"/><rect x="1200" y="672" width="24" height="24" fill="#c7285e"/><rect x="1224" y="672" width="24" height="24" fill="#cd2759"/><rect x="1248" y="672" width="24" height="24" fill="#d42656"/><rect x="1272" y="672" width="24" height="24" fill="#dc2655"/><rect x="1296" y="672" width="24" height="24" fill="#e42553"/><rect x="1320" y="672" width="24" height="24" fill="#ec2550"/><rect x="1344" y="672" width="24" height="24" fill="#f1264e"/><rect x="1368" y="672" width="24" height="24" fill="#f3284e"/><rect x="-24" y="696" width="24" height="24" fill="#363a76"/><rect x="0" y="696" width="24" height="24" fill="#383a77"/><rect x="24" y="696" width="24" height="24" fill="#3a3977"/><rect x="48" y="696" width="24" height="24" fill="#3c3977"/><rect x="72" y="696" width="24" height="24" fill="#3e3977"/><rect x="96" y="696" width="24" height="24" fill="#3f3978"/><rect x="120" y="696" width="24" height="24" fill="#413a78"/><rect x="144" y="696" width="24" height="24" fill="#433a79"/><rect x="168" y="696" width="24" height="24" fill="#463a79"/><rect x="192" y="696" width="24" height="24" fill="#493a7a"/><rect x="216" y="696" width="24" height="24" fill="#4c3a7a"/><rect x="240" y="696" width="24" height="24" fill="#4f3a7a"/><rect x="264" y="696" width="24" height="24" fill="#513a7a"/><rect x="288" y="696" width="24" height="24" fill="#533a7b"/><rect x="312" y="696" width="24" height="24" fill="#573a7b"/><rect x="336" y="696" width="24" height="24" fill="#5b3a7c"/><rect x="360" y="696" width="24" height="24" fill="#5d3a7c"/><rect x="384" y="696" width="24" height="24" fill="#5f3a7d"/><rect x="408" y="696" width="24" height="24" fill="#603a7e"/><rect x="432" y="696" width="24" height="24" fill="#613a7f"/><rect x="456" y="696" width="24" height="24" fill="#633a80"/><rect x="480" y="696" width="24" height="24" fill="#663981"/><rect x="504" y="696" width="24" height="24" fill="#683981"/><rect x="528" y="696" width="24" height="24" fill="#6b3982"/><rect x="552" y="696" width="24" height="24" fill="#6d3983"/><rect x="576" y="696" width="24" height="24" fill="#6f3984"/><rect x="600" y="696" width="24" height="24" fill="#723984"/><rect x="624" y="696" width="24" height="24" fill="#743984"/><rect x="648" y="696" width="24" height="24" fill="#763984"/><rect x="672" y="696" width="24" height="24" fill="#783984"/><rect x="696" y="696" width="24" height="24" fill="#7a3984"/><rect x="720" y="696" width="24" height="24" fill="#7c3984"/><rect x="744" y="696" width="24" height="24" fill="#7d3985"/><rect x="768" y="696" width="24" height="24" fill="#7f3986"/><rect x="792" y="696" width="24" height="24" fill="#813986"/><rect x="816" y="696" width="24" height="24" fill="#833886"/><rect x="840" y="696" width="24" height="24" fill="#863786"/><rect x="864" y="696" width="24" height="24" fill="#893686"/><rect x="888" y="696" width="24" height="24" fill="#8c3585"/><rect x="912" y="696" width="24" height="24" fill="#8f3585"/><rect x="936" y="696" width="24" height="24" fill="#913484"/><rect x="960" y="696" width="24" height="24" fill="#943382"/><rect x="984" y="696" width="24" height="24" fill="#96327f"/><rect x="1008" y="696" width="24" height="24" fill="#98317c"/><rect x="1032" y="696" width="24" height="24" fill="#9a3079"/><rect x="1056" y="696" width="24" height="24" fill="#9d2f77"/><rect x="1080" y="696" width="24" height="24" fill="#a12d73"/><rect x="1104" y="696" width="24" height="24" fill="#a42d71"/><rect x="1128" y="696" width="24" height="24" fill="#a92d70"/><rect x="1152" y="696" width="24" height="24" fill="#ad2d6d"/><rect x="1176" y="696" width="24" height="24" fill="#b32d6b"/><rect x="1200" y="696" width="24" height="24" fill="#b92c68"/><rect x="1224" y="696" width="24" height="24" fill="#bf2c64"/><rect x="1248" y="696" width="24" height="24" fill="#c72b60"/><rect x="1272" y="696" width="24" height="24" fill="#d02a5e"/><rect x="1296" y="696" width="24" height="24" fill="#d92a5a"/><rect x="1320" y="696" width="24" height="24" fill="#e22956"/><rect x="1344" y="696" width="24" height="24" fill="#ea2a53"/><rect x="1368" y="696" width="24" height="24" fill="#ec2b53"/><rect x="-24" y="720" width="24" height="24" fill="#303a74"/><rect x="0" y="720" width="24" height="24" fill="#323a74"/><rect x="24" y="720" width="24" height="24" fill="#343a74"/><rect x="48" y="720" width="24" height="24" fill="#353a74"/><rect x="72" y="720" width="24" height="24" fill="#363a75"/><rect x="96" y="720" width="24" height="24" fill="#373a75"/><rect x="120" y="720" width="24" height="24" fill="#383a76"/><rect x="144" y="720" width="24" height="24" fill="#393a77"/><rect x="168" y="720" width="24" height="24" fill="#3c3a77"/><rect x="192" y="720" width="24" height="24" fill="#3f3a78"/><rect x="216" y="720" width="24" height="24" fill="#413a78"/><rect x="240" y="720" width="24" height="24" fill="#433a78"/><rect x="264" y="720" width="24" height="24" fill="#453a78"/><rect x="288" y="720" width="24" height="24" fill="#483a78"/><rect x="312" y="720" width="24" height="24" fill="#4b3a79"/><rect x="336" y="720" width="24" height="24" fill="#4e3a7a"/><rect x="360" y="720" width="24" height="24" fill="#503a7a"/><rect x="384" y="720" width="24" height="24" fill="#513a7b"/><rect x="408" y="720" width="24" height="24" fill="#523a7c"/><rect x="432" y="720" width="24" height="24" fill="#533a7d"/><rect x="456" y="720" width="24" height="24" fill="#553a7d"/><rect x="480" y="720" width="24" height="24" fill="#573a7e"/><rect x="504" y="720" width="24" height="24" fill="#593a7f"/><rect x="528" y="720" width="24" height="24" fill="#5b3a7f"/><rect x="552" y="720" width="24" height="24" fill="#5d3a80"/><rect x="576" y="720" width="24" height="24" fill="#5f3a81"/><rect x="600" y="720" width="24" height="24" fill="#613a81"/><rect x="624" y="720" width="24" height="24" fill="#633a81"/><rect x="648" y="720" width="24" height="24" fill="#653a81"/><rect x="672" y="720" width="24" height="24" fill="#673a82"/><rect x="696" y="720" width="24" height="24" fill="#693a82"/><rect x="720" y="720" width="24" height="24" fill="#6b3a82"/><rect x="744" y="720" width="24" height="24" fill="#6d3a83"/><rect x="768" y="720" width="24" height="24" fill="#6e3a84"/><rect x="792" y="720" width="24" height="24" fill="#703a84"/><rect x="816" y="720" width="24" height="24" fill="#723985"/><rect x="840" y="720" width="24" height="24" fill="#753985"/><rect x="864" y="720" width="24" height="24" fill="#783885"/><rect x="888" y="720" width="24" height="24" fill="#7a3885"/><rect x="912" y="720" width="24" height="24" fill="#7d3785"/><rect x="936" y="720" width="24" height="24" fill="#7f3784"/><rect x="960" y="720" width="24" height="24" fill="#813683"/><rect x="984" y="720" width="24" height="24" fill="#833582"/><rect x="1008" y="720" width="24" height="24" fill="#853581"/><rect x="1032" y="720" width="24" height="24" fill="#883480"/><rect x="1056" y="720" width="24" height="24" fill="#8a3580"/><rect x="1080" y="720" width="24" height="24" fill="#8e3681"/><rect x="1104" y="720" width="24" height="24" fill="#92357e"/><rect x="1128" y="720" width="24" height="24" fill="#97337a"/><rect x="1152" y="720" width="24" height="24" fill="#9c3277"/><rect x="1176" y="720" width="24" height="24" fill="#a23275"/><rect x="1200" y="720" width="24" height="24" fill="#a93273"/><rect x="1224" y="720" width="24" height="24" fill="#b03272"/><rect x="1248" y="720" width="24" height="24" fill="#b8316f"/><rect x="1272" y="720" width="24" height="24" fill="#c0306b"/><rect x="1296" y="720" width="24" height="24" fill="#c92f66"/><rect x="1320" y="720" width="24" height="24" fill="#d22e61"/><rect x="1344" y="720" width="24" height="24" fill="#da2e5d"/><rect x="1368" y="720" width="24" height="24" fill="#dc2f5d"/><rect x="-24" y="744" width="24" height="24" fill="#2b3a71"/><rect x="0" y="744" width="24" height="24" fill="#2d3a71"/><rect x="24" y="744" width="24" height="24" fill="#2d3a71"/><rect x="48" y="744" width="24" height="24" fill="#2e3a72"/><rect x="72" y="744" width="24" height="24" fill="#2e3a72"/><rect x="96" y="744" width="24" height="24" fill="#2f3a73"/><rect x="120" y="744" width="24" height="24" fill="#2f3a74"/><rect x="144" y="744" width="24" height="24" fill="#313a74"/><rect x="168" y="744" width="24" height="24" fill="#333a75"/><rect x="192" y="744" width="24" height="24" fill="#353a75"/><rect x="216" y="744" width="24" height="24" fill="#373a76"/><rect x="240" y="744" width="24" height="24" fill="#3a3a76"/><rect x="264" y="744" width="24" height="24" fill="#3c3a76"/><rect x="288" y="744" width="24" height="24" fill="#3e3a77"/><rect x="312" y="744" width="24" height="24" fill="#403a77"/><rect x="336" y="744" width="24" height="24" fill="#423a77"/><rect x="360" y="744" width="24" height="24" fill="#443a78"/><rect x="384" y="744" width="24" height="24" fill="#453a78"/><rect x="408" y="744" width="24" height="24" fill="#463a79"/><rect x="432" y="744" width="24" height="24" fill="#473a79"/><rect x="456" y="744" width="24" height="24" fill="#483a7a"/><rect x="480" y="744" width="24" height="24" fill="#493a7b"/><rect x="504" y="744" width="24" height="24" fill="#4b3a7b"/><rect x="528" y="744" width="24" height="24" fill="#4c3a7c"/><rect x="552" y="744" width="24" height="24" fill="#4e3a7d"/><rect x="576" y="744" width="24" height="24" fill="#4f3a7d"/><rect x="600" y="744" width="24" height="24" fill="#513a7d"/><rect x="624" y="744" width="24" height="24" fill="#533a7e"/><rect x="648" y="744" width="24" height="24" fill="#553a7f"/><rect x="672" y="744" width="24" height="24" fill="#573a7f"/><rect x="696" y="744" width="24" height="24" fill="#593a80"/><rect x="720" y="744" width="24" height="24" fill="#5b3a80"/><rect x="744" y="744" width="24" height="24" fill="#5c3a80"/><rect x="768" y="744" width="24" height="24" fill="#5e3a81"/><rect x="792" y="744" width="24" height="24" fill="#603a81"/><rect x="816" y="744" width="24" height="24" fill="#623a82"/><rect x="840" y="744" width="24" height="24" fill="#643983"/><rect x="864" y="744" width="24" height="24" fill="#673984"/><rect x="888" y="744" width="24" height="24" fill="#693984"/><rect x="912" y="744" width="24" height="24" fill="#6b3984"/><rect x="936" y="744" width="24" height="24" fill="#6d3984"/><rect x="960" y="744" width="24" height="24" fill="#6f3884"/><rect x="984" y="744" width="24" height="24" fill="#713884"/><rect x="1008" y="744" width="24" height="24" fill="#723884"/><rect x="1032" y="744" width="24" height="24" fill="#743884"/><rect x="1056" y="744" width="24" height="24" fill="#773985"/><rect x="1080" y="744" width="24" height="24" fill="#7a3a86"/><rect x="1104" y="744" width="24" height="24" fill="#7e3984"/><rect x="1128" y="744" width="24" height="24" fill="#833882"/><rect x="1152" y="744" width="24" height="24" fill="#8a3780"/><rect x="1176" y="744" width="24" height="24" fill="#90377e"/><rect x="1200" y="744" width="24" height="24" fill="#97377e"/><rect x="1224" y="744" width="24" height="24" fill="#9f377d"/><rect x="1248" y="744" width="24" height="24" fill="#a6377b"/><rect x="1272" y="744" width="24" height="24" fill="#ae3677"/><rect x="1296" y="744" width="24" height="24" fill="#b53573"/><rect x="1320" y="744" width="24" height="24" fill="#bb3470"/><rect x="1344" y="744" width="24" height="24" fill="#c0346e"/><rect x="1368" y="744" width="24" height="24" fill="#c3346c"/><rect x="-24" y="768" width="24" height="24" fill="#24396f"/><rect x="0" y="768" width="24" height="24" fill="#26396f"/><rect x="24" y="768" width="24" height="24" fill="#273a6f"/><rect x="48" y="768" width="24" height="24" fill="#273a6f"/><rect x="72" y="768" width="24" height="24" fill="#273a70"/><rect x="96" y="768" width="24" height="24" fill="#273a71"/><rect x="120" y="768" width="24" height="24" fill="#273a72"/><rect x="144" y="768" width="24" height="24" fill="#283a72"/><rect x="168" y="768" width="24" height="24" fill="#2a3a73"/><rect x="192" y="768" width="24" height="24" fill="#2c3a73"/><rect x="216" y="768" width="24" height="24" fill="#2e3a74"/><rect x="240" y="768" width="24" height="24" fill="#303a74"/><rect x="264" y="768" width="24" height="24" fill="#333a74"/><rect x="288" y="768" width="24" height="24" fill="#353a75"/><rect x="312" y="768" width="24" height="24" fill="#363a75"/><rect x="336" y="768" width="24" height="24" fill="#373a75"/><rect x="360" y="768" width="24" height="24" fill="#383a75"/><rect x="384" y="768" width="24" height="24" fill="#393a76"/><rect x="408" y="768" width="24" height="24" fill="#3a3a76"/><rect x="432" y="768" width="24" height="24" fill="#3a3a76"/><rect x="456" y="768" width="24" height="24" fill="#3b3a76"/><rect x="480" y="768" width="24" height="24" fill="#3c3a77"/><rect x="504" y="768" width="24" height="24" fill="#3d3a78"/><rect x="528" y="768" width="24" height="24" fill="#3e3a79"/><rect x="552" y="768" width="24" height="24" fill="#3f3a7a"/><rect x="576" y="768" width="24" height="24" fill="#403a7a"/><rect x="600" y="768" width="24" height="24" fill="#423a7a"/><rect x="624" y="768" width="24" height="24" fill="#433a7b"/><rect x="648" y="768" width="24" height="24" fill="#453a7c"/><rect x="672" y="768" width="24" height="24" fill="#473a7c"/><rect x="696" y="768" width="24" height="24" fill="#493a7d"/><rect x="720" y="768" width="24" height="24" fill="#4b3a7e"/><rect x="744" y="768" width="24" height="24" fill="#4c3a7e"/><rect x="768" y="768" width="24" height="24" fill="#4e3a7e"/><rect x="792" y="768" width="24" height="24" fill="#503a7f"/><rect x="816" y="768" width="24" height="24" fill="#523a80"/><rect x="840" y="768" width="24" height="24" fill="#543a81"/><rect x="864" y="768" width="24" height="24" fill="#553a82"/><rect x="888" y="768" width="24" height="24" fill="#573a83"/><rect x="912" y="768" width="24" height="24" fill="#593a83"/><rect x="936" y="768" width="24" height="24" fill="#5b3a84"/><rect x="960" y="768" width="24" height="24" fill="#5c3a84"/><rect x="984" y="768" width="24" height="24" fill="#5e3b85"/><rect x="1008" y="768" width="24" height="24" fill="#603b86"/><rect x="1032" y="768" width="24" height="24" fill="#613b86"/><rect x="1056" y="768" width="24" height="24" fill="#633b87"/><rect x="1080" y="768" width="24" height="24" fill="#663b86"/><rect x="1104" y="768" width="24" height="24" fill="#6a3b86"/><rect x="1128" y="768" width="24" height="24" fill="#703b86"/><rect x="1152" y="768" width="24" height="24" fill="#773b86"/><rect x="1176" y="768" width="24" height="24" fill="#7e3b86"/><rect x="1200" y="768" width="24" height="24" fill="#853b85"/><rect x="1224" y="768" width="24" height="24" fill="#8c3c85"/><rect x="1248" y="768" width="24" height="24" fill="#933b83"/><rect x="1272" y="768" width="24" height="24" fill="#993b81"/><rect x="1296" y="768" width="24" height="24" fill="#9e3a7f"/><rect x="1320" y="768" width="24" height="24" fill="#a2397e"/><rect x="1344" y="768" width="24" height="24" fill="#a4397d"/><rect x="1368" y="768" width="24" height="24" fill="#a8397b"/></g>
<rect x="0" y="0" width="1366" height="420" fill="#2a84c4"/>
<rect x="0" y="0" width="200" height="420" fill="#e84a50"/>
<path d="M936 20 L936 25 C1000 40 1060 62 1109 82 C1160 100 1230 116 1366 124 L1366 0 L936 0Z" fill="url(#wtr)"/>
<path d="M700 20 L936 20 L936 25 C1000 40 1060 62 1109 82 C1160 100 1230 116 1366 124 L1366 200 C1300 185 1230 172 1191 165 C1150 150 1120 138 1089 131.6 C1040 120 1010 113 986 111 C940 108 910 104 896 100.8 C860 92 830 82 822 78 C790 65 770 58 740 51.6 L700 48Z" fill="url(#wlb)"/>
<path d="M700 150 C740 140 790 134 830 136 C880 140 910 150 960 180 L960 260 L700 260Z" fill="#b8c8ee"/>
<rect x="1150" y="0" width="216" height="300" fill="url(#wdr)"/>
<path d="M1280 300 C1305 268 1335 230 1366 208 L1366 370 L1280 370Z" fill="url(#wlv)"/>
<path d="M1280 366 C1310 352 1340 345 1366 342 L1366 600 L1280 600Z" fill="url(#wor)"/>
</svg>
<svg class="abs" style="left:1300px;top:32px" width="40" height="40" viewBox="0 0 40 40"><defs><linearGradient id="hg32" x1="0" y1="0" x2="0.3" y2="1"><stop offset="0" stop-color="#e4e8ec"/><stop offset="1" stop-color="#b0b6bc"/></linearGradient></defs><path d="M3.5 1 H36.5 Q38.2 1 38.4 2.8 L39.4 31.5 H0.6 L1.6 2.8 Q1.8 1 3.5 1Z" fill="url(#hg32)" stroke="#8a9096" stroke-width="0.5"/><rect x="0.6" y="31.5" width="38.8" height="7" rx="1.2" fill="#54585c"/><path d="M17 33v4M19 33v4M21 33v4M23 33v4M25 33v4M27 33v4" stroke="#9aa0a4" stroke-width="0.7"/><rect x="9" y="3" width="17" height="4.2" rx="0.5" fill="#4a4e52"/><circle cx="24" cy="5" r="1.1" fill="#eee"/><path d="M26 8 C28 12 33 16 32 22 C31 29 23 31 17 29.5 C9 27.5 8 19 12 15 C14 13 17 13 19 14" fill="none" stroke="#7e848a" stroke-width="0.8"/><circle cx="20" cy="21" r="4.5" fill="none" stroke="#8a9096" stroke-width="0.8"/><path d="M31.5 3.5 L33 26" stroke="#7e848a" stroke-width="0.7"/></svg><div class="abs dl" style="left:1260px;top:80.5px">Macintosh</div><div class="abs dl" style="left:1260px;top:93.0px">SSD</div>
<svg class="abs" style="left:1300px;top:116px" width="40" height="40" viewBox="0 0 40 40"><defs><linearGradient id="hg116" x1="0" y1="0" x2="0.3" y2="1"><stop offset="0" stop-color="#e4e8ec"/><stop offset="1" stop-color="#b0b6bc"/></linearGradient></defs><path d="M3.5 1 H36.5 Q38.2 1 38.4 2.8 L39.4 31.5 H0.6 L1.6 2.8 Q1.8 1 3.5 1Z" fill="url(#hg116)" stroke="#8a9096" stroke-width="0.5"/><rect x="0.6" y="31.5" width="38.8" height="7" rx="1.2" fill="#54585c"/><path d="M17 33v4M19 33v4M21 33v4M23 33v4M25 33v4M27 33v4" stroke="#9aa0a4" stroke-width="0.7"/><rect x="9" y="3" width="17" height="4.2" rx="0.5" fill="#4a4e52"/><circle cx="24" cy="5" r="1.1" fill="#eee"/><path d="M26 8 C28 12 33 16 32 22 C31 29 23 31 17 29.5 C9 27.5 8 19 12 15 C14 13 17 13 19 14" fill="none" stroke="#7e848a" stroke-width="0.8"/><circle cx="20" cy="21" r="4.5" fill="none" stroke="#8a9096" stroke-width="0.8"/><path d="M31.5 3.5 L33 26" stroke="#7e848a" stroke-width="0.7"/></svg><div class="abs dl" style="left:1260px;top:164.0px">EFI</div>
<svg class="abs" style="left:1300px;top:200px" width="40" height="40" viewBox="0 0 40 40"><defs><linearGradient id="hg200" x1="0" y1="0" x2="0.3" y2="1"><stop offset="0" stop-color="#e4e8ec"/><stop offset="1" stop-color="#b0b6bc"/></linearGradient></defs><path d="M3.5 1 H36.5 Q38.2 1 38.4 2.8 L39.4 31.5 H0.6 L1.6 2.8 Q1.8 1 3.5 1Z" fill="url(#hg200)" stroke="#8a9096" stroke-width="0.5"/><rect x="0.6" y="31.5" width="38.8" height="7" rx="1.2" fill="#54585c"/><path d="M17 33v4M19 33v4M21 33v4M23 33v4M25 33v4M27 33v4" stroke="#9aa0a4" stroke-width="0.7"/><rect x="9" y="3" width="17" height="4.2" rx="0.5" fill="#4a4e52"/><circle cx="24" cy="5" r="1.1" fill="#eee"/><path d="M26 8 C28 12 33 16 32 22 C31 29 23 31 17 29.5 C9 27.5 8 19 12 15 C14 13 17 13 19 14" fill="none" stroke="#7e848a" stroke-width="0.8"/><circle cx="20" cy="21" r="4.5" fill="none" stroke="#8a9096" stroke-width="0.8"/><path d="M31.5 3.5 L33 26" stroke="#7e848a" stroke-width="0.7"/></svg><div class="abs dl" style="left:1260px;top:248.6px">Muflihun</div>
<svg class="abs" style="left:1300px;top:284px" width="40" height="40" viewBox="0 0 40 40"><defs><linearGradient id="hg284" x1="0" y1="0" x2="0.3" y2="1"><stop offset="0" stop-color="#e4e8ec"/><stop offset="1" stop-color="#b0b6bc"/></linearGradient></defs><path d="M3.5 1 H36.5 Q38.2 1 38.4 2.8 L39.4 31.5 H0.6 L1.6 2.8 Q1.8 1 3.5 1Z" fill="url(#hg284)" stroke="#8a9096" stroke-width="0.5"/><rect x="0.6" y="31.5" width="38.8" height="7" rx="1.2" fill="#54585c"/><path d="M17 33v4M19 33v4M21 33v4M23 33v4M25 33v4M27 33v4" stroke="#9aa0a4" stroke-width="0.7"/><rect x="9" y="3" width="17" height="4.2" rx="0.5" fill="#4a4e52"/><circle cx="24" cy="5" r="1.1" fill="#eee"/><path d="M26 8 C28 12 33 16 32 22 C31 29 23 31 17 29.5 C9 27.5 8 19 12 15 C14 13 17 13 19 14" fill="none" stroke="#7e848a" stroke-width="0.8"/><circle cx="20" cy="21" r="4.5" fill="none" stroke="#8a9096" stroke-width="0.8"/><path d="M31.5 3.5 L33 26" stroke="#7e848a" stroke-width="0.7"/></svg><div class="abs dl" style="left:1260px;top:332.0px">Windows 10</div>
<svg class="abs" style="left:1300px;top:368px" width="40" height="40" viewBox="0 0 40 40"><defs><linearGradient id="hg368" x1="0" y1="0" x2="0.3" y2="1"><stop offset="0" stop-color="#e4e8ec"/><stop offset="1" stop-color="#b0b6bc"/></linearGradient></defs><path d="M3.5 1 H36.5 Q38.2 1 38.4 2.8 L39.4 31.5 H0.6 L1.6 2.8 Q1.8 1 3.5 1Z" fill="url(#hg368)" stroke="#8a9096" stroke-width="0.5"/><rect x="0.6" y="31.5" width="38.8" height="7" rx="1.2" fill="#54585c"/><path d="M17 33v4M19 33v4M21 33v4M23 33v4M25 33v4M27 33v4" stroke="#9aa0a4" stroke-width="0.7"/><rect x="9" y="3" width="17" height="4.2" rx="0.5" fill="#4a4e52"/><circle cx="24" cy="5" r="1.1" fill="#eee"/><path d="M26 8 C28 12 33 16 32 22 C31 29 23 31 17 29.5 C9 27.5 8 19 12 15 C14 13 17 13 19 14" fill="none" stroke="#7e848a" stroke-width="0.8"/><circle cx="20" cy="21" r="4.5" fill="none" stroke="#8a9096" stroke-width="0.8"/><path d="M31.5 3.5 L33 26" stroke="#7e848a" stroke-width="0.7"/></svg><div class="abs dl" style="left:1260px;top:416.0px">Zero</div>
<svg class="abs" style="left:1298px;top:458px" width="44" height="34" viewBox="0 0 44 34"><path d="M2 4 A2 2 0 0 1 4 2 H16 L19 5 H40 A2 2 0 0 1 42 7 V30 A2 2 0 0 1 40 32 H4 A2 2 0 0 1 2 30Z" fill="#3a9ae0"/><rect x="2" y="8" width="40" height="24" rx="2" fill="#5ab4f0"/></svg><div class="abs dl" style="left:1260px;top:500px">Doc</div>
<div id="menubar">
<span style="left:57px;font-weight:bold;font-size:13.65px;top:4.5px">System Preferences</span>
<span style="left:207px">Edit</span>
<span style="left:252px">View</span>
<span style="left:302px">Window</span>
<span style="left:371px">Help</span>
<svg class="abs" style="left:20px;top:2px" width="18" height="20" viewBox="0 0 18 20"><path d="M12.2 1.2 C12.3 2.6 11.7 3.9 10.9 4.8 C10 5.8 8.8 6.4 7.6 6.3 C7.5 5 8.1 3.7 8.9 2.9 C9.8 1.9 11.1 1.3 12.2 1.2Z M15.6 14.2 C15.1 15.3 14.8 15.8 14.2 16.7 C13.3 18 12.1 19.6 10.6 19.6 C9.3 19.6 9 18.8 7.2 18.8 C5.5 18.8 5.1 19.6 3.8 19.6 C2.3 19.6 1.2 18.2 0.4 16.9 C-1.9 13.3 -2.1 9.1 -0.7 6.9 C0.3 5.4 1.9 4.5 3.4 4.5 C5 4.5 6 5.4 7.3 5.4 C8.6 5.4 9.4 4.5 11 4.5 C12.4 4.5 13.8 5.3 14.8 6.5 C11.5 8.3 12 13 15.6 14.2Z" fill="#fff" transform="translate(2 0) scale(0.93)"/></svg>
<svg class="abs" style="left:880px;top:4px" width="18" height="17" viewBox="0 0 18 17"><rect x="1" y="1" width="16" height="15" rx="2" fill="none" stroke="#fff" stroke-width="1.4"/><path d="M2 9 L5.5 9 L7.5 4.5 L10 12.5 L12 7.5 L16 7.5" fill="none" stroke="#fff" stroke-width="1.3"/></svg>
<svg class="abs" style="left:915px;top:6px" width="17" height="12" viewBox="0 0 17 12"><rect width="17" height="12" fill="#fff"/><g fill="#c8283c"><rect y="0" width="17" height="1.3"/><rect y="2.6" width="17" height="1.3"/><rect y="5.2" width="17" height="1.3"/><rect y="7.8" width="17" height="1.3"/><rect y="10.4" width="17" height="1.6"/></g><rect width="7.5" height="6.5" fill="#2a3a8a"/></svg>
<svg class="abs" style="left:949px;top:5px" width="21" height="15" viewBox="0 0 21 15"><path d="M1 5 H4.5 L9 1.2 V13.8 L4.5 10 H1Z" fill="#fff"/><path d="M12 5 C13.5 6.5 13.5 8.5 12 10 M14.5 3 C17 5.5 17 9.5 14.5 12 M17 1 C20.5 4.5 20.5 10.5 17 14" fill="none" stroke="#fff" stroke-width="1.3" stroke-linecap="round"/></svg>
<div class="abs" style="left:985px;top:5px;font-size:12.2px;line-height:15px;color:#fff">100%</div>
<svg class="abs" style="left:1020px;top:5px" width="27" height="15" viewBox="0 0 27 15"><rect x="1" y="1.5" width="22" height="12" rx="3" fill="none" stroke="#fff" stroke-width="1.2"/><rect x="24" y="5.5" width="2" height="4" rx="1" fill="#fff"/><rect x="3" y="3.5" width="18" height="8" rx="1.5" fill="#fff"/><path d="M13.5 2.5 L8.5 8.5 H12 L10.5 12.5 L15.5 6.5 H12Z" fill="#3a7cbe" stroke="#3a7cbe" stroke-width="0.8"/></svg>
<svg class="abs" style="left:1064px;top:5px" width="18" height="14" viewBox="0 0 18 14"><path d="M1 5 C5.5 0.5 12.5 0.5 17 5" fill="none" stroke="#fff" stroke-width="1.6" stroke-linecap="round"/><path d="M3.8 7.8 C6.8 5 11.2 5 14.2 7.8" fill="none" stroke="#fff" stroke-width="1.6" stroke-linecap="round"/><path d="M6.6 10.4 C8 9.1 10 9.1 11.4 10.4 L9 12.8Z" fill="#fff"/></svg>
<div class="abs" style="left:1098px;top:4px;font-size:14px;line-height:16px;color:#fff">Muflihun</div>
<svg class="abs" style="left:1166px;top:5px" width="16" height="16" viewBox="0 0 16 16"><circle cx="6.5" cy="6.5" r="5" fill="none" stroke="#fff" stroke-width="1.6"/><path d="M10.2 10.2 L14.5 14.5" stroke="#fff" stroke-width="1.8" stroke-linecap="round"/></svg>
<svg class="abs" style="left:1197px;top:5px" width="18" height="15" viewBox="0 0 18 15"><rect x="1" y="1" width="16" height="6" rx="3" fill="#fff"/><circle cx="5" cy="4" r="2" fill="#3a7cbe"/><rect x="1.6" y="8.6" width="14.8" height="4.8" rx="2.4" fill="none" stroke="#fff" stroke-width="1.2"/><circle cx="13" cy="11" r="2" fill="#fff"/></svg>
<div class="abs" style="left:1230px;top:4px;font-size:13.72px;line-height:16px;color:#fff;white-space:pre">Wed 16 Mar  17.55</div>
</div>
<div id="si"><div id="siw" class="abs" style="left:2px;top:0;width:738px;height:541px">
<div class="abs" style="left:200px;top:0;width:538px;height:29px;background:#eee9e9;border-bottom:1px solid #dbd6d6"></div>
<div class="tl" style="left:6px;top:8px"></div><div class="tl" style="left:26px;top:8px"></div><div class="tl" style="left:46px;top:8px"></div>
<div class="abs" style="left:200px;top:6px;width:538px;text-align:center;font-size:13px;font-weight:bold;color:#a9a5a5">MacBook Pro</div>
<div class="abs" style="left:189px;top:31px;width:8px;height:327px;border-radius:4px;background:#bdb8b8"></div>
<div class="abs" style="left:8px;top:403px;width:167px;height:15px;border-radius:5px;background:#d7d1d1"></div>
<svg class="chev" style="left:12px;top:31px" width="9" height="6" viewBox="0 0 9 6"><path d="M1 1l3.5 3.5L8 1" fill="none" stroke="#8e8a8a" stroke-width="1.3"/></svg>
<div class="sec" style="left:25px;top:28px">Hardware</div>
<div class="it" style="left:41px;top:43px">ATA</div>
<div class="it" style="left:41px;top:58px">Apple Pay</div>
<div class="it" style="left:41px;top:73px">Audio</div>
<div class="it" style="left:41px;top:88px">Bluetooth</div>
<div class="it" style="left:41px;top:103px">Camera</div>
<div class="it" style="left:41px;top:118px">Card Reader</div>
<div class="it" style="left:41px;top:133px">Controller</div>
<div class="it" style="left:41px;top:148px">Diagnostics</div>
<div class="it" style="left:41px;top:163px">Disc Burning</div>
<div class="it" style="left:41px;top:178px">Ethernet Cards</div>
<div class="it" style="left:41px;top:193px">Fibre Channel</div>
<div class="it" style="left:41px;top:208px">FireWire</div>
<div class="it" style="left:41px;top:223px">Graphics/Displays</div>
<div class="it" style="left:41px;top:238px">Memory</div>
<div class="it" style="left:41px;top:253px">NVMExpress</div>
<div class="it" style="left:41px;top:268px">PCI</div>
<div class="it" style="left:41px;top:283px">Parallel SCSI</div>
<div class="it" style="left:41px;top:298px">Power</div>
<div class="it" style="left:41px;top:313px">Printers</div>
<div class="it" style="left:41px;top:328px">SAS</div>
<div class="it" style="left:41px;top:343px">SATA</div>
<div class="it" style="left:41px;top:358px">SPI</div>
<div class="it" style="left:41px;top:373px">Storage</div>
<div class="it" style="left:41px;top:388px">Thunderbolt/USB4</div>
<div class="it" style="left:41px;top:403px">USB</div>
<svg class="chev" style="left:12px;top:421px" width="9" height="6" viewBox="0 0 9 6"><path d="M1 1l3.5 3.5L8 1" fill="none" stroke="#8e8a8a" stroke-width="1.3"/></svg>
<div class="sec" style="left:25px;top:418px">Network</div>
<div class="it" style="left:41px;top:433px">Firewall</div>
<div class="it" style="left:41px;top:448px">Locations</div>
<div class="it" style="left:41px;top:463px">Volumes</div>
<div class="it" style="left:41px;top:478px">WWAN</div>
<div class="it" style="left:41px;top:493px">Wi-Fi</div>
<svg class="chev" style="left:12px;top:511px" width="9" height="6" viewBox="0 0 9 6"><path d="M1 1l3.5 3.5L8 1" fill="none" stroke="#8e8a8a" stroke-width="1.3"/></svg>
<div class="sec" style="left:25px;top:508px">Software</div>
<div class="it" style="left:41px;top:523px">Accessibility</div>
<div class="abs" style="left:200px;top:29px;width:538px;height:484px;background:#fff"></div>
<div class="abs" style="left:200px;top:55px;width:538px;height:1px;background:#e2dede"></div>
<div class="abs" style="left:210px;top:35px;width:1px;height:15px;background:#dcd8d8"></div>
<div class="abs" style="left:727px;top:35px;width:1px;height:15px;background:#dcd8d8"></div>
<div class="abs hd" style="left:228px;top:35px">USB Device Tree</div>
<svg class="abs" style="left:711px;top:39px" width="9" height="6" viewBox="0 0 9 6"><path d="M1 5l3.5-3.5L8 5" fill="none" stroke="#8a8a8a" stroke-width="1.2"/></svg>
<div class="row sel" style="top:66px"></div>
<div class="row str" style="top:81px"></div>
<div class="row str" style="top:111px"></div>
<div class="row str" style="top:141px"></div>
<div class="row str" style="top:171px"></div>
<div class="tr" style="left:228px;top:65.5px">USB 3.0 Bus</div>
<div class="tr" style="left:244px;top:80.5px">Bluetooth HCI</div>
<div class="tr" style="left:244px;top:95.5px">USB2.0 VGA UVC WebCam</div>
<div class="tr" style="left:244px;top:110.5px">USB2.0-CRW</div>
<div class="tr" style="left:244px;top:125.5px">USB Optical Mouse</div>
<svg class="chev" style="left:215px;top:70px" width="9" height="6" viewBox="0 0 9 6"><path d="M1 1l3.5 3.5L8 1" fill="none" stroke="#555" stroke-width="1.2"/></svg>
<div class="abs" style="left:200px;top:180px;width:538px;height:1px;background:#d5d1d1"></div>
<div class="abs" style="left:200px;top:181px;width:538px;height:7px;background:#f6f4f4"></div>
<div class="abs" style="left:200px;top:188px;width:538px;height:1px;background:#dedada"></div>
<div class="abs" style="left:466px;top:181px;width:6px;height:6px;border-radius:3px;background:#dcd8d8"></div>
<div class="dt" style="left:216px;top:199px;font-weight:bold;">USB 3.0 Bus:</div>
<div class="dt" style="left:222px;top:226px;">Host Controller Driver:</div>
<div class="dt" style="left:348px;top:226px;">AppleUSBXHCISPTLP</div>
<div class="dt" style="left:222px;top:239px;">PCI Device ID:</div>
<div class="dt" style="left:348px;top:239px;">0x9d2f</div>
<div class="dt" style="left:222px;top:252px;">PCI Revision ID:</div>
<div class="dt" style="left:348px;top:252px;">0x0021</div>
<div class="dt" style="left:222px;top:265px;">PCI Vendor ID:</div>
<div class="dt" style="left:348px;top:265px;">0x8086</div>
<div class="dt" style="left:256px;top:292px;font-weight:bold;">Bluetooth HCI:</div>
<div class="dt" style="left:262px;top:319px;">Product ID:</div>
<div class="dt" style="left:428px;top:319px;">0x3010</div>
<div class="dt" style="left:262px;top:332px;">Vendor ID:</div>
<div class="dt" style="left:428px;top:332px;">0x04ca&nbsp; (Lite-On Technology Corp.)</div>
<div class="dt" style="left:262px;top:345px;">Version:</div>
<div class="dt" style="left:428px;top:345px;">0.01</div>
<div class="dt" style="left:262px;top:358px;">Speed:</div>
<div class="dt" style="left:428px;top:358px;">Up to 12 Mb/s</div>
<div class="dt" style="left:262px;top:371px;">Location ID:</div>
<div class="dt" style="left:428px;top:371px;">0x14700000 / 3</div>
<div class="dt" style="left:262px;top:384px;">Current Available (mA):</div>
<div class="dt" style="left:428px;top:384px;">500</div>
<div class="dt" style="left:262px;top:397px;">Current Required (mA):</div>
<div class="dt" style="left:428px;top:397px;">100</div>
<div class="dt" style="left:262px;top:410px;">Extra Operating Current (mA):</div>
<div class="dt" style="left:428px;top:410px;">0</div>
<div class="dt" style="left:262px;top:423px;">Built-In:</div>
<div class="dt" style="left:428px;top:423px;">Yes</div>
<div class="dt" style="left:256px;top:450px;font-weight:bold;">USB2.0 VGA UVC WebCam:</div>
<div class="dt" style="left:262px;top:477px;">Product ID:</div>
<div class="dt" style="left:428px;top:477px;">0xb52b</div>
<div class="dt" style="left:262px;top:490px;">Vendor ID:</div>
<div class="dt" style="left:428px;top:490px;">0x04f2&nbsp; (Chicony Electronics Co., Ltd.)</div>
<div class="dt" style="left:262px;top:503px;">Version:</div>
<div class="dt" style="left:428px;top:503px;">95.52</div>
<div class="abs" style="left:200px;top:513px;width:538px;height:28px;background:#eee9e9;border-top:1px solid #dcd7d7"></div>
<div class="abs" style="left:216px;top:521px;width:14px;height:13px;background:#6a7fa8;border-radius:1px"></div>
<div class="abs" style="left:235px;top:520px;font-size:12.5px;color:#8e8a8a;white-space:nowrap">Muflihun’s MacBook Pro &nbsp;›&nbsp;Hardware &nbsp;›&nbsp;USB &nbsp;›&nbsp;USB 3.0 Bus</div>
</div></div>
<div id="tp">
<div class="abs" style="left:0px;top:0px;width:668px;height:53px;background:#f4f0f0;border-bottom:1px solid #d6d2d2"></div>
<div class="abs" style="left:20px;top:20px;width:12px;height:12px;border-radius:6px;background:#fe5f57;border:0.5px solid #e0443e"></div>
<div class="abs" style="left:40px;top:20px;width:12px;height:12px;border-radius:6px;background:#f6b63a;border:0.5px solid #dc9a26"></div>
<div class="abs" style="left:60px;top:20px;width:12px;height:12px;border-radius:6px;background:#d6d2d2;border:0.5px solid #c2bebe"></div>
<svg class="abs" style="left:103px;top:18px" width="12" height="16" viewBox="0 0 12 16"><path d="M9 1.5L2.5 8L9 14.5" fill="none" stroke="#5a5656" stroke-width="1.6" stroke-linecap="round" stroke-linejoin="round"/></svg>
<svg class="abs" style="left:139px;top:18px" width="12" height="16" viewBox="0 0 12 16"><path d="M3 1.5L9.5 8L3 14.5" fill="none" stroke="#b4b0b0" stroke-width="1.6" stroke-linecap="round" stroke-linejoin="round"/></svg>
<svg class="abs" style="left:177px;top:21px" width="18" height="13" viewBox="0 0 18 13"><rect x="0" y="0" width="3" height="3" rx="0.6" fill="#5a5656"/><rect x="5" y="0" width="3" height="3" rx="0.6" fill="#5a5656"/><rect x="10" y="0" width="3" height="3" rx="0.6" fill="#5a5656"/><rect x="15" y="0" width="3" height="3" rx="0.6" fill="#5a5656"/><rect x="0" y="5" width="3" height="3" rx="0.6" fill="#5a5656"/><rect x="5" y="5" width="3" height="3" rx="0.6" fill="#5a5656"/><rect x="10" y="5" width="3" height="3" rx="0.6" fill="#5a5656"/><rect x="15" y="5" width="3" height="3" rx="0.6" fill="#5a5656"/><rect x="0" y="10" width="3" height="3" rx="0.6" fill="#5a5656"/><rect x="5" y="10" width="3" height="3" rx="0.6" fill="#5a5656"/><rect x="10" y="10" width="3" height="3" rx="0.6" fill="#5a5656"/><rect x="15" y="10" width="3" height="3" rx="0.6" fill="#5a5656"/></svg>
<div class="abs t" style="left:211px;top:17.3px;font-size:15px;line-height:19px;color:#4a4646;font-weight:bold">Trackpad</div>
<div class="abs" style="left:492px;top:10px;width:166px;height:31px;border-radius:9px;background:#8fb2ec"></div>
<div class="abs" style="left:495px;top:13px;width:160px;height:25px;border-radius:6px;background:#f6f3f3;border:1px solid #c9c5c5"></div>
<svg class="abs" style="left:502px;top:17px" width="18" height="18" viewBox="0 0 18 18"><circle cx="7.5" cy="7.5" r="5.6" fill="none" stroke="#6a6666" stroke-width="1.5"/><path d="M11.6 11.6L16 16" stroke="#6a6666" stroke-width="1.6" stroke-linecap="round"/></svg>
<div class="abs" style="left:525px;top:18px;width:1px;height:15px;background:#222"></div>
<div class="abs t" style="left:526px;top:18.5px;font-size:13px;line-height:16px;color:#b3afaf;">Search</div>
<div class="abs" style="left:0px;top:53px;width:668px;height:475px;background:#f2eeed"></div>
<div class="abs" style="left:20px;top:82px;width:628px;height:392px;border-radius:6px;background:#ebe7e6;border:1px solid #dedad9"></div>
<div class="abs" style="left:173px;top:72px;width:323px;height:22px;border-radius:6px;background:#e3dfde;border:1px solid #d6d2d1"></div>
<div class="abs" style="left:173px;top:72px;width:100px;height:22px;border-radius:6px;background:#fff;border:0.5px solid #c8c4c4;box-shadow:0 0.5px 1px rgba(0,0,0,.15)"></div>
<div class="abs" style="left:381px;top:77px;width:1px;height:12px;background:#cbc7c6"></div>
<div class="abs t" style="left:186px;top:74.3px;font-size:13.45px;line-height:17px;color:#222;">Point &amp; Click</div>
<div class="abs t" style="left:285px;top:74.3px;font-size:13.45px;line-height:17px;color:#222;">Scroll &amp; Zoom</div>
<div class="abs t" style="left:393px;top:74.4px;font-size:13.4px;line-height:17px;color:#222;">More Gestures</div>
<div class="abs" style="left:30px;top:209px;width:311px;height:53px;border-radius:7px;background:#d9d5d4"></div>
<div class="abs" style="left:40px;top:128px"><svg width="14" height="14" viewBox="0 0 14 14" style="display:block"><rect width="14" height="14" rx="3" fill="#2b7cf6"/><path d="M3.2 7.4l2.6 2.8L10.8 3.6" fill="none" stroke="#fff" stroke-width="1.9" stroke-linecap="round" stroke-linejoin="round"/></svg></div>
<div class="abs" style="left:40px;top:178px"><svg width="14" height="14" viewBox="0 0 14 14" style="display:block"><rect width="14" height="14" rx="3" fill="#2b7cf6"/><path d="M3.2 7.4l2.6 2.8L10.8 3.6" fill="none" stroke="#fff" stroke-width="1.9" stroke-linecap="round" stroke-linejoin="round"/></svg></div>
<div class="abs" style="left:40px;top:228px"><svg width="14" height="14" viewBox="0 0 14 14" style="display:block"><rect width="14" height="14" rx="3" fill="#2b7cf6"/><path d="M3.2 7.4l2.6 2.8L10.8 3.6" fill="none" stroke="#fff" stroke-width="1.9" stroke-linecap="round" stroke-linejoin="round"/></svg></div>
<div class="abs" style="left:39px;top:383px;width:14px;height:14px;border-radius:3px;background:#fff;border:1px solid #c4c0c0"></div>
<div class="abs" style="left:39px;top:404px;width:14px;height:14px;border-radius:3px;background:#fff;border:1px solid #c4c0c0"></div>
<div class="abs t" style="left:61px;top:117.4px;font-size:13.7px;line-height:17px;color:#262222;">Look up &amp; data detectors</div>
<div class="abs t" style="left:61px;top:135.4px;font-size:11.9px;line-height:15px;color:#8c8888;">Tap with three fingers</div>
<div class="abs t" style="left:61px;top:167.4px;font-size:13.7px;line-height:17px;color:#262222;">Secondary click</div>
<div class="abs t" style="left:59px;top:185.3px;font-size:12px;line-height:15px;color:#8c8888;">Click or tap with two fingers</div>
<svg class="abs" style="left:208px;top:189px" width="9" height="6" viewBox="0 0 9 6"><path d="M1 1l3.5 3.5L8 1" fill="none" stroke="#555" stroke-width="1.3"/></svg>
<div class="abs t" style="left:61px;top:217.4px;font-size:13.7px;line-height:17px;color:#262222;">Tap to click</div>
<div class="abs t" style="left:61px;top:235.4px;font-size:11.9px;line-height:15px;color:#8c8888;">Tap with one finger</div>
<div class="abs" style="left:39px;top:280px;width:287px;height:1px;background:#d7d3d2"></div>
<div class="abs" style="left:39px;top:366px;width:287px;height:1px;background:#d7d3d2"></div>
<div class="abs t" style="left:-41px;top:290.8px;width:300px;text-align:center;font-size:13.5px;line-height:17px;color:#262222;">Click</div>
<div class="abs t" style="left:113px;top:290.8px;width:300px;text-align:center;font-size:13.5px;line-height:17px;color:#262222;">Tracking speed</div>
<div class="abs" style="left:58px;top:321px;width:102px;height:4px;border-radius:2px;background:#dcd8d7"></div>
<div class="abs" style="left:58px;top:318px;width:1px;height:9px;background:#c6c2c1"></div>
<div class="abs" style="left:159px;top:318px;width:1px;height:9px;background:#c6c2c1"></div>
<div class="abs" style="left:105px;top:315px;width:9px;height:16px;border-radius:5px;background:#fff;box-shadow:0 0 0 0.5px rgba(0,0,0,.2),0 1px 2px rgba(0,0,0,.2)"></div>
<div class="abs" style="left:212px;top:321px;width:103px;height:4px;border-radius:2px;background:#dcd8d7"></div>
<div class="abs" style="left:212px;top:318px;width:1px;height:9px;background:#c6c2c1"></div>
<div class="abs" style="left:223px;top:318px;width:1px;height:9px;background:#c6c2c1"></div>
<div class="abs" style="left:235px;top:318px;width:1px;height:9px;background:#c6c2c1"></div>
<div class="abs" style="left:246px;top:318px;width:1px;height:9px;background:#c6c2c1"></div>
<div class="abs" style="left:257px;top:318px;width:1px;height:9px;background:#c6c2c1"></div>
<div class="abs" style="left:269px;top:318px;width:1px;height:9px;background:#c6c2c1"></div>
<div class="abs" style="left:280px;top:318px;width:1px;height:9px;background:#c6c2c1"></div>
<div class="abs" style="left:291px;top:318px;width:1px;height:9px;background:#c6c2c1"></div>
<div class="abs" style="left:303px;top:318px;width:1px;height:9px;background:#c6c2c1"></div>
<div class="abs" style="left:314px;top:318px;width:1px;height:9px;background:#c6c2c1"></div>
<div class="abs" style="left:254px;top:315px;width:9px;height:16px;border-radius:5px;background:#fff;box-shadow:0 0 0 0.5px rgba(0,0,0,.2),0 1px 2px rgba(0,0,0,.2)"></div>
<div class="abs t" style="left:52px;top:332.3px;font-size:10.8px;line-height:14px;color:#3a3636;">Light</div>
<div class="abs t" style="left:-41px;top:332.3px;width:300px;text-align:center;font-size:10.8px;line-height:14px;color:#3a3636;">Medium</div>
<div class="abs t" style="left:3px;top:332.3px;width:300px;text-align:center;font-size:10.8px;line-height:14px;color:#3a3636;">Firm</div>
<div class="abs t" style="left:207px;top:332.3px;font-size:10.8px;line-height:14px;color:#3a3636;">Slow</div>
<div class="abs t" style="left:298px;top:332.3px;font-size:10.8px;line-height:14px;color:#3a3636;">Fast</div>
<div class="abs t" style="left:61px;top:380.8px;font-size:13.6px;line-height:17px;color:#262222;">Silent clicking</div>
<div class="abs t" style="left:61px;top:402.8px;font-size:13.6px;line-height:17px;color:#262222;">Force Click and haptic feedback</div>
<div class="abs t" style="left:61px;top:423.4px;font-size:11.84px;line-height:15px;color:#262222;">Click then press firmly for Quick Look, Look up,</div>
<div class="abs t" style="left:61px;top:437.4px;font-size:11.84px;line-height:15px;color:#262222;">and variable speed media controls.</div>
<svg class="abs" style="left:354px;top:109px" width="276" height="352" viewBox="0 0 276 352">
<defs>
<linearGradient id="iw" x1="0" y1="0" x2="0.6" y2="1"><stop offset="0" stop-color="#f25a48"/><stop offset=".3" stop-color="#f03058"/><stop offset=".65" stop-color="#b82a80"/><stop offset="1" stop-color="#6a2a8a"/></linearGradient><linearGradient id="imb" x1="0" y1="0" x2="1" y2="0"><stop offset="0" stop-color="#9a80c0"/><stop offset=".5" stop-color="#8a88c8"/><stop offset="1" stop-color="#4a90d0"/></linearGradient>
<linearGradient id="isil" x1="0" y1="0" x2="0" y2="1"><stop offset="0" stop-color="#c4c4c4"/><stop offset="1" stop-color="#cecece"/></linearGradient>
<linearGradient id="itp" x1="0" y1="0" x2="1" y2="1"><stop offset="0" stop-color="#acacac"/><stop offset="1" stop-color="#9e9e9e"/></linearGradient>
<linearGradient id="isky" x1="0" y1="0" x2="1" y2="0"><stop offset="0" stop-color="#c8d6e6"/><stop offset="1" stop-color="#dfe6ee"/></linearGradient>
<linearGradient id="ifing" x1="0" y1="0" x2="1" y2="0"><stop offset="0" stop-color="#c89a80"/><stop offset=".5" stop-color="#e6c6b0"/><stop offset="1" stop-color="#c49478"/></linearGradient>
<filter id="ib1"><feGaussianBlur stdDeviation="4"/></filter>
<filter id="ib3"><feGaussianBlur stdDeviation="1.1"/></filter>
<filter id="ib2"><feGaussianBlur stdDeviation="2"/></filter>
<clipPath id="iph"><rect x="68" y="18" width="179.5" height="135"/></clipPath>
<clipPath id="iscr"><rect x="0" y="0" width="276" height="172"/></clipPath>
</defs>
<g clip-path="url(#iscr)">
<rect width="276" height="172" fill="url(#iw)"/>
<g filter="url(#ib1)">
<path d="M110 -10 L290 -10 L290 62 C270 56 250 52 230 50 C180 40 140 20 110 -10Z" fill="#2a7cc8"/>
<path d="M230 50 C255 52 275 58 290 64 L290 88 C270 80 250 76 235 74Z" fill="#dfe6f2"/>
<path d="M235 74 C255 78 275 84 290 90 L290 145 L235 145Z" fill="#f2a43c"/>
<path d="M235 130 L290 140 L290 190 L235 190Z" fill="#f24a50"/>
</g>
<rect x="0" y="0" width="276" height="4.5" fill="url(#imb)"/>
<rect x="28" y="8" width="219.5" height="145" fill="#f4f0f0"/>
<rect x="28" y="8" width="40" height="145" fill="#f6c6dc"/>
<circle cx="33" cy="13" r="1.4" fill="#f25a52"/><circle cx="37.5" cy="13" r="1.4" fill="#f5b83a"/><circle cx="42" cy="13" r="1.4" fill="#3ac24a"/>
<rect x="33" y="24" width="30" height="23" fill="#c4d2e2"/><path d="M33 36 C36 30 40 32 42 40 L42 47 L33 47Z" fill="#e05a30"/><path d="M40 26 C46 22 54 24 56 32 C58 40 60 44 62 47 L42 47 C40 40 38 32 40 26Z" fill="#c8823e"/><ellipse cx="48" cy="31" rx="5" ry="4.5" fill="#ecc0aa"/><ellipse cx="54" cy="39" rx="4" ry="5" fill="#eec2ac"/><path d="M58 32 C62 36 63 42 63 47 L59 47Z" fill="#4a2a1a"/>
<rect x="33" y="61" width="30" height="22" fill="#8a7a6a"/>
<rect x="33" y="61" width="30" height="8" fill="#b8c4d4"/>
<rect x="33" y="98" width="30" height="22" fill="#a07a5a"/>
<rect x="33" y="98" width="30" height="9" fill="#b4b8bc"/>
<rect x="33" y="134" width="30" height="19" fill="#3a3a3a"/>
<rect x="33" y="134" width="30" height="7" fill="#c4ccd6"/>
<rect x="40" y="50" width="16" height="2.5" fill="#2a6ad8"/>
<g clip-path="url(#iph)">
<rect x="68" y="18" width="179.5" height="135" fill="url(#isky)"/>
<g filter="url(#ib3)">
<polygon points="68.2,54.0 81.6,51.5 94.3,61.5 103.4,70.6 108.9,83.4 116.2,107.0 127.1,134.4 138.0,152.6 68.2,152.6" fill="#e85e32"/>
<polygon points="68.2,100.0 80.0,105.0 92.0,125.0 100.0,152.6 68.2,152.6" fill="#c8401f"/>
<polygon points="74.0,66.0 92.0,64.0 104.0,82.0 111.0,105.0 104.0,108.0 92.0,88.0 80.0,78.0" fill="#f27a44"/>
<polygon points="78.0,86.0 88.0,92.0 98.0,112.0 104.0,134.0 97.0,138.0 86.0,110.0" fill="#7a2418"/>
<polygon points="127.0,17.0 110.7,43.3 99.8,67.0 103.4,70.6 108.9,83.4 116.2,107.0 127.1,134.4 138.0,152.6 175.0,152.6 182.0,125.3 192.9,88.9 205.6,61.5 207.5,43.3 204.0,17.0" fill="#cf8c42"/>
<polygon points="112.0,45.0 104.0,66.0 112.0,84.0 120.0,110.0 130.0,135.0 136.0,130.0 126.0,100.0 118.0,75.0" fill="#e6ac5c"/>
<polygon points="140.0,100.0 160.0,105.0 176.0,110.0 170.0,140.0 160.0,152.6 140.0,152.6 135.0,125.0" fill="#9a6432"/>
<polygon points="134.0,86.0 162.0,83.4 184.0,71.0 192.0,80.0 184.0,95.0 176.0,108.0 158.0,106.0 142.0,100.0" fill="#2c1c14"/>
<polygon points="127.0,17.0 198.0,17.0 196.5,52.4 183.8,70.6 161.9,83.4 140.0,88.0 127.1,70.6 123.5,48.8 121.0,30.0" fill="#ebbba6"/>
<polygon points="123.5,48.8 127.1,70.6 140.0,88.0 150.0,86.0 138.0,68.0 130.0,50.0" fill="#d89a84"/>
<polygon points="203.0,58.0 223.9,54.3 236.6,67.0 247.2,92.5 247.2,110.0 232.0,90.0 220.0,70.0 210.0,64.0" fill="#7a5040"/>
<polygon points="223.9,74.3 236.6,80.0 247.2,100.0 247.2,152.6 225.0,152.6 229.3,125.0 229.3,98.0" fill="#3a2418"/>
<polygon points="176.0,105.0 190.0,85.0 200.0,135.0 247.0,135.0 247.0,152.6 168.0,152.6" fill="#8a4a30"/>
<polygon points="192.9,76.1 211.1,65.2 223.9,74.3 229.3,98.0 227.5,125.3 220.2,143.5 205.6,150.8 187.4,143.5 180.1,118.0 182.0,92.5" fill="#ecbaa4"/>
<polygon points="187.4,143.5 205.6,150.8 220.2,143.5 212.0,138.0 198.0,140.0" fill="#d8947e"/>
<polygon points="206.0,146.0 225.0,140.0 236.0,146.0 240.0,152.6 204.0,152.6" fill="#b83a2e"/>
<polygon points="205.6,61.5 207.5,43.3 200.0,40.0 195.0,70.0 185.0,100.0 176.0,130.0 168.0,152.6 178.0,152.6 184.0,125.0 193.0,95.0" fill="#d4923e"/>
<ellipse cx="163" cy="27" rx="3" ry="1.5" fill="#7a5048"/>
<ellipse cx="186" cy="40" rx="2" ry="3" fill="#6a4038"/>
<ellipse cx="170" cy="38" rx="3" ry="2.5" fill="#d07a70"/>
<ellipse cx="155" cy="52" rx="6" ry="2.2" fill="#c8625a"/>
<ellipse cx="211" cy="97" rx="3.5" ry="1.5" fill="#5a3a30"/>
<ellipse cx="193" cy="104" rx="3" ry="3.5" fill="#dca08c"/>
<ellipse cx="191" cy="118" rx="6" ry="2.2" fill="#c87a70"/>
</g>
</g>
<rect x="68" y="8" width="179.5" height="10" fill="#f6f4f4"/><rect x="72" y="10.5" width="6" height="4" fill="#ccc"/><rect x="82" y="10" width="14" height="1.6" fill="#888"/><rect x="82" y="13" width="26" height="1.2" fill="#bbb"/>
<rect x="9" y="159" width="258" height="12" rx="3" fill="#8a78b0" opacity=".9"/>
<g>
<rect x="12" y="160.5" width="8" height="8" rx="2" fill="#4a9ae8"/><rect x="22" y="160.5" width="8" height="8" rx="2" fill="#d8d8e8"/><rect x="32" y="160.5" width="8" height="8" rx="2" fill="#3a8ae8"/><rect x="42" y="160.5" width="8" height="8" rx="2" fill="#4ac84a"/><rect x="52" y="160.5" width="8" height="8" rx="2" fill="#3a9af0"/><rect x="62" y="160.5" width="8" height="8" rx="2" fill="#8ad07a"/><rect x="72" y="160.5" width="8" height="8" rx="2" fill="#f0a050"/><rect x="82" y="160.5" width="8" height="8" rx="2" fill="#3ac84a"/><rect x="92" y="160.5" width="8" height="8" rx="2" fill="#f4f4f4"/><rect x="102" y="160.5" width="8" height="8" rx="2" fill="#a07848"/><rect x="112" y="160.5" width="8" height="8" rx="2" fill="#f8f8f8"/><rect x="122" y="160.5" width="8" height="8" rx="2" fill="#f8e070"/><rect x="132" y="160.5" width="8" height="8" rx="2" fill="#222"/><rect x="142" y="160.5" width="8" height="8" rx="2" fill="#f04050"/><rect x="152" y="160.5" width="8" height="8" rx="2" fill="#a050d0"/><rect x="162" y="160.5" width="8" height="8" rx="2" fill="#f06070"/><rect x="172" y="160.5" width="8" height="8" rx="2" fill="#e8e8f0"/><rect x="182" y="160.5" width="8" height="8" rx="2" fill="#60b860"/><rect x="192" y="160.5" width="8" height="8" rx="2" fill="#f0f0f0"/><rect x="202" y="160.5" width="8" height="8" rx="2" fill="#2a80e0"/><rect x="212" y="160.5" width="8" height="8" rx="2" fill="#808080"/><rect x="228" y="160.5" width="8" height="8" rx="2" fill="#d0d8e8"/><rect x="245" y="160.5" width="8" height="8" rx="2" fill="#5ab0f0"/><rect x="255" y="160.5" width="8" height="8" rx="2" fill="#e8e8e8"/>
</g>
</g>
<rect x="0" y="172" width="276" height="180" fill="url(#isil)"/>
<rect x="0" y="172" width="276" height="27" fill="#9a9a9a"/>
<rect x="0" y="172" width="17.5" height="26" rx="2" fill="#1c1c1c"/>
<rect x="21" y="172" width="31.5" height="26" rx="2" fill="#1c1c1c"/>
<rect x="56" y="172" width="135.4" height="26" rx="2" fill="#1c1c1c"/>
<rect x="194.7" y="172" width="31" height="26" rx="2" fill="#1c1c1c"/>
<rect x="229.4" y="172" width="25" height="26" rx="2" fill="#1c1c1c"/>
<rect x="258" y="172" width="18" height="26" rx="2" fill="#1c1c1c"/>
<g font-family="Liberation Sans" font-size="5" fill="#ddd"><text x="1" y="193">option</text><text x="25" y="193">command</text><text x="198" y="193">command</text><text x="233" y="193">option</text><text x="44" y="182">⌘</text><text x="205" y="182">⌘</text></g>
<rect x="39" y="205" width="198" height="123" rx="3" fill="url(#itp)" stroke="#8e8e8e" stroke-width="0.8"/>
<rect x="0" y="335" width="276" height="17" fill="#e6c4aa"/>
<rect x="0" y="333" width="276" height="3" fill="#d0b4a0" opacity=".6"/>
<g filter="url(#ib3)">
<path d="M94 352 L94 332 C94 322 100 318 107 318 C115 318 121 322 122 330 L124 352Z" fill="#e2bca4"/>
<path d="M153 352 L155 330 C157 320 166 316 176 318 C186 320 192 328 193 338 L194 352Z" fill="#e0b89e"/>
<path d="M123 352 C123 330 122 300 124 280 C125 270 130 264 139 264 C148 264 153 270 154 280 C156 300 155 330 155 352Z" fill="#dcb298"/>
<path d="M128 352 C128 330 127 300 129 282 C130 273 134 268 139 268 C145 268 149 273 150 282 C151 300 150 330 150 352Z" fill="#e8c8b4"/>
<ellipse cx="139" cy="273" rx="7.5" ry="6" fill="#eed8cc"/>
<path d="M131 320 C135 322 143 322 148 320" fill="none" stroke="#b88a74" stroke-width="0.8"/>
</g>
</svg>
<div class="abs" style="left:423px;top:488px;width:194px;height:20px;border-radius:5px;background:#fff;box-shadow:0 0 0 0.5px rgba(0,0,0,.22),0 1px 1.5px rgba(0,0,0,.2)"></div>
<div class="abs t" style="left:370px;top:489.3px;width:300px;text-align:center;font-size:13.5px;line-height:17px;color:#262222;">Set Up Bluetooth Trackpad...</div>
<div class="abs" style="left:628px;top:488px;width:21px;height:21px;border-radius:11px;background:#fff;box-shadow:0 0 0 0.5px rgba(0,0,0,.22),0 1px 1.5px rgba(0,0,0,.2)"></div>
<div class="abs t" style="left:488.5px;top:489.1px;width:300px;text-align:center;font-size:15.5px;line-height:19px;color:#333;">?</div>
</div>
<svg class="abs" style="left:0;top:640px" width="30" height="62" viewBox="0 640 30 62"><path d="M28 645 L8 645 Q1.5 645 1.5 651 L1.5 681 Q1.5 685 5 687 L28 698 Z" fill="#ebebeb" stroke="#cfcfcf" stroke-width="0.6"/><path d="M12.5 657.5 L16.5 661.5 L12.5 665.5" fill="none" stroke="#666" stroke-width="2" stroke-linecap="round"/></svg>
<div id="tv">
<div class="abs" style="left:0;top:0;width:255px;height:107px;background:#0e63cd"></div>
<div class="abs" style="left:12px;top:10px;width:40px;height:40px;background:#1591f2;border-radius:2px"></div>
<svg class="abs" style="left:12px;top:10px" width="40" height="40" viewBox="0 0 40 40"><circle cx="20" cy="20" r="16" fill="#fff"/><path d="M7.5 20 L14.5 14.5 L14.5 18.3 L25.5 18.3 L25.5 14.5 L32.5 20 L25.5 25.5 L25.5 21.7 L14.5 21.7 L14.5 25.5 Z" fill="#1a74e0"/></svg>
<div class="abs" style="left:64px;top:5px;font-size:22px;line-height:26px;color:#fff;white-space:nowrap"><b>Team</b>Viewer</div>
<div class="abs" style="left:64px;top:33px;font-size:11.8px;line-height:14px;color:#aabcd6;white-space:nowrap">Free license (non-commercial<br>use only)</div>
<svg class="abs" style="left:234px;top:19px" width="14" height="14" viewBox="0 0 14 14"><path d="M2 2L12 12M12 2L2 12" stroke="#fff" stroke-width="2.8" stroke-linecap="round"/></svg>
<svg class="abs" style="left:10px;top:80.5px" width="200" height="20" viewBox="0 0 200 20" fill="#fff">
<rect x="4" y="4.5" width="11" height="10" rx="1"/><path d="M15 9.5 L20 5.5 L20 13.5Z"/>
<path d="M35.5 12 A6.5 6.5 0 0 1 48.5 12" fill="none" stroke="#fff" stroke-width="2"/><rect x="33" y="10.5" width="4" height="6.5" rx="1.5"/><rect x="47" y="10.5" width="4" height="6.5" rx="1.5"/><path d="M48.5 16 Q48 19 43.5 19" fill="none" stroke="#fff" stroke-width="1.3"/><ellipse cx="42.5" cy="19" rx="1.8" ry="1.2"/><path d="M64 4 h9 a2 2 0 0 1 2 2 v5 a2 2 0 0 1 -2 2 h-6 l-3 3 v-3 a2 2 0 0 1 -2 -2 v-5 a2 2 0 0 1 2-2z"/><path d="M72 8 h8 a2 2 0 0 1 2 2 v5 a2 2 0 0 1 -2 2 v3 l-3 -3 h-5 a2 2 0 0 1 -2 -2z" fill="#fff" stroke="#0e63cd" stroke-width="1"/>
<rect x="95" y="4" width="9" height="11" fill="none" stroke="#fff" stroke-width="1.6"/><rect x="98" y="7" width="9" height="11" fill="#fff"/><path d="M100 10h5M100 12.5h5M100 15h5" stroke="#0e63cd" stroke-width="1"/>
<path d="M140 4 L134 10" stroke="#fff" stroke-width="3" stroke-linecap="round"/><path d="M131 8.5 L136 13.5 L134 15.5 L129 10.5Z"/><path d="M128.5 11 L133.5 16 L127.5 20.5 L123.5 18.5 L124 15Z"/><path d="M125 17.5 L129 13.5 M127 19 L131 15" stroke="#0e63cd" stroke-width="0.6"/><circle cx="139" cy="5" r="0.8" fill="#0e63cd"/><path d="M157.5 5.5 L162.5 10.5 L157.5 15.5 M162.5 5.5 L167.5 10.5 L162.5 15.5" fill="none" stroke="#fff" stroke-width="2" stroke-linecap="round" stroke-linejoin="round"/>
</svg>
<svg class="abs" style="left:7px;top:116px" width="9" height="7" viewBox="0 0 9 7"><path d="M1 1.5l3.5 3.5L8 1.5" fill="none" stroke="#aaa" stroke-width="1.2"/></svg>
<div class="abs" style="left:21px;top:110px;font-size:15.2px;line-height:18px;color:#2e2e2e;white-space:nowrap">Session list</div>
<svg class="abs" style="left:225px;top:112px" width="27" height="15" viewBox="0 0 27 15"><g transform="translate(7.5 7.5)"><circle r="4.6" fill="#2e2e2e"/><g fill="#2e2e2e"><rect x="-1.6" y="-7" width="3.2" height="14"/><rect x="-1.6" y="-7" width="3.2" height="14" transform="rotate(45)"/><rect x="-1.6" y="-7" width="3.2" height="14" transform="rotate(90)"/><rect x="-1.6" y="-7" width="3.2" height="14" transform="rotate(135)"/></g><circle r="1.8" fill="#ececec"/></g><path d="M18 6l3 3 3-3" fill="none" stroke="#2e2e2e" stroke-width="1.4"/></svg>
<svg class="abs" style="left:8px;top:146px" width="20" height="20" viewBox="0 0 20 20"><circle cx="10" cy="6" r="4.5" fill="#b8c4ce"/><path d="M1 19 C1 12 5 11 10 11 C15 11 19 12 19 19Z" fill="#b8c4ce"/></svg>
<div class="abs" style="left:34px;top:148px;font-size:13.6px;line-height:16px;color:#262626;white-space:nowrap">Andres (776 375 627)</div>
<svg class="abs" style="left:169px;top:153px" width="9" height="7" viewBox="0 0 9 7"><path d="M1 1.5l3.5 3.5L8 1.5" fill="none" stroke="#333" stroke-width="1.4"/></svg>
<svg class="abs" style="left:226px;top:148px" width="14" height="14" viewBox="0 0 14 14"><path d="M1 1 L13 5.5 L8 7.5 L12 12 L11 13 L6.5 8.5 L4.5 13 Z" fill="#7a7a7a"/></svg>
<div class="abs" style="left:0;top:176px;width:255px;height:1px;background:#d2d2d2"></div>
<div class="abs" style="left:0;top:184px;width:251px;text-align:right;font-size:11.65px;line-height:14px;color:#333;white-space:nowrap">www.teamviewer.com</div>
</div>
<div id="dock"></div>
<svg class="abs" style="left:299px;top:727px" width="26" height="26" viewBox="0 0 26 26"><rect x="0.5" y="0.5" width="25" height="25" rx="6" fill="#e9eef6"/><path d="M6.5 0.5 H13 C11 8 10.5 14 12.5 25.5 H6.5 A6 6 0 0 1 0.5 19.5 V6.5 A6 6 0 0 1 6.5 0.5Z" fill="#2f8bf0"/><path d="M6 17 C10 21 16 21 20 17" fill="none" stroke="#1a2a4a" stroke-width="1.3"/><rect x="8" y="8" width="1.5" height="4" fill="#1a2a4a"/><rect x="17" y="8" width="1.5" height="4" fill="#1a2a4a"/></svg><div class="abs" style="left:310.5px;top:757.5px;width:3px;height:3px;border-radius:2px;background:#1a1a1a"></div>
<svg class="abs" style="left:332px;top:727px" width="26" height="26" viewBox="0 0 26 26"><rect x="0.5" y="0.5" width="25" height="25" rx="6" fill="#d6d8e0"/><rect x="5" y="5" width="4" height="4" rx="1" fill="#f0a030"/><rect x="11" y="5" width="4" height="4" rx="1" fill="#f0c040"/><rect x="17" y="5" width="4" height="4" rx="1" fill="#f06a30"/><rect x="5" y="11" width="4" height="4" rx="1" fill="#e04040"/><rect x="11" y="11" width="4" height="4" rx="1" fill="#7a7a7a"/><rect x="17" y="11" width="4" height="4" rx="1" fill="#f04a60"/><rect x="5" y="17" width="4" height="4" rx="1" fill="#a050e0"/><rect x="11" y="17" width="4" height="4" rx="1" fill="#3a8af0"/><rect x="17" y="17" width="4" height="4" rx="1" fill="#30c0a0"/></svg>
<svg class="abs" style="left:365px;top:727px" width="26" height="26" viewBox="0 0 26 26"><rect x="0.5" y="0.5" width="25" height="25" rx="6" fill="#f2f2f2"/><circle cx="13" cy="13" r="10" fill="#2a8cf2"/><circle cx="13" cy="13" r="8.5" fill="none" stroke="#d8ecff" stroke-width="0.6"/><path d="M18 8 L14.2 14.2 L8 18 L11.8 11.8Z" fill="#f24a3a"/><path d="M8 18 L11.8 11.8 L14.2 14.2Z" fill="#fff"/></svg>
<svg class="abs" style="left:398px;top:727px" width="26" height="26" viewBox="0 0 26 26"><rect x="0.5" y="0.5" width="25" height="25" rx="6" fill="#34c84a"/><ellipse cx="13" cy="12" rx="8.5" ry="6.5" fill="#fff"/><path d="M6 17 L5 21 L10 17.5Z" fill="#fff"/></svg>
<svg class="abs" style="left:431px;top:727px" width="26" height="26" viewBox="0 0 26 26"><rect x="0.5" y="0.5" width="25" height="25" rx="6" fill="#1a9cf8"/><rect x="5" y="8" width="16" height="11" rx="1" fill="#fff"/><path d="M5 8 L13 14.5 L21 8" fill="none" stroke="#a8c8e8" stroke-width="1"/></svg>
<svg class="abs" style="left:464px;top:727px" width="26" height="26" viewBox="0 0 26 26"><rect x="0.5" y="0.5" width="25" height="25" rx="6" fill="#f0ece0"/><path d="M12 0.5 C20 3 24 9 25.5 14 V6.5 A6 6 0 0 0 19.5 0.5Z" fill="#7acb6a"/><path d="M14 0.5 C20 4 23 9 25.5 12" fill="none" stroke="#fff" stroke-width="2"/><rect x="6" y="0.5" width="2" height="25" fill="#4a8ae8"/><circle cx="7" cy="15" r="2.5" fill="#2a7ae8" stroke="#fff" stroke-width="1"/><rect x="15" y="17" width="8" height="6" rx="1" fill="#3a6ad8"/><path d="M0.5 6 C3 10 2 14 0.5 18" fill="none" stroke="#f0a0b0" stroke-width="2"/></svg>
<svg class="abs" style="left:497px;top:727px" width="26" height="26" viewBox="0 0 26 26"><rect x="0.5" y="0.5" width="25" height="25" rx="6" fill="#fafafa"/><ellipse cx="13" cy="7.5" rx="3" ry="5" fill="#f7b733" opacity=".9" transform="rotate(0 13 13)"/><ellipse cx="13" cy="7.5" rx="3" ry="5" fill="#f08a30" opacity=".9" transform="rotate(45 13 13)"/><ellipse cx="13" cy="7.5" rx="3" ry="5" fill="#e8445a" opacity=".9" transform="rotate(90 13 13)"/><ellipse cx="13" cy="7.5" rx="3" ry="5" fill="#c04ab8" opacity=".9" transform="rotate(135 13 13)"/><ellipse cx="13" cy="7.5" rx="3" ry="5" fill="#6a5ad8" opacity=".9" transform="rotate(180 13 13)"/><ellipse cx="13" cy="7.5" rx="3" ry="5" fill="#3a9ae8" opacity=".9" transform="rotate(225 13 13)"/><ellipse cx="13" cy="7.5" rx="3" ry="5" fill="#3ac2a0" opacity=".9" transform="rotate(270 13 13)"/><ellipse cx="13" cy="7.5" rx="3" ry="5" fill="#8ad04a" opacity=".9" transform="rotate(315 13 13)"/></svg>
<svg class="abs" style="left:530px;top:727px" width="26" height="26" viewBox="0 0 26 26"><rect x="0.5" y="0.5" width="25" height="25" rx="6" fill="#34c84a"/><rect x="5" y="8.5" width="11" height="9" rx="2" fill="#fff"/><path d="M16 13 L21 9 L21 17Z" fill="#fff"/></svg>
<svg class="abs" style="left:563px;top:727px" width="26" height="26" viewBox="0 0 26 26"><rect x="0.5" y="0.5" width="25" height="25" rx="6" fill="#fafafa"/><path d="M0.5 6.5 A6 6 0 0 1 6.5 0.5 H19.5 A6 6 0 0 1 25.5 6.5 V8 H0.5Z" fill="#f04a44"/><text x="13" y="6.6" font-family="Liberation Sans" font-size="5" font-weight="bold" fill="#fff" text-anchor="middle">MAR</text><text x="13" y="22" font-family="Liberation Sans" font-size="13" fill="#333" text-anchor="middle">16</text></svg>
<svg class="abs" style="left:596px;top:727px" width="26" height="26" viewBox="0 0 26 26"><rect x="0.5" y="0.5" width="25" height="25" rx="6" fill="#a87a48"/><rect x="2" y="2" width="22" height="22" rx="5" fill="#b48a58"/><circle cx="13" cy="11" r="5" fill="none" stroke="#8a6038" stroke-width="1.2"/><path d="M6 21 C8 15 18 15 20 21" fill="none" stroke="#8a6038" stroke-width="1.2"/></svg>
<svg class="abs" style="left:629px;top:727px" width="26" height="26" viewBox="0 0 26 26"><rect x="0.5" y="0.5" width="25" height="25" rx="6" fill="#fafafa"/><circle cx="7" cy="8" r="1.6" fill="#3a8af0"/><circle cx="7" cy="13" r="1.6" fill="#f04a40"/><circle cx="7" cy="18" r="1.6" fill="#f0a030"/><path d="M10.5 8h10M10.5 13h10M10.5 18h10" stroke="#d8d8d8" stroke-width="1"/></svg>
<svg class="abs" style="left:662px;top:727px" width="26" height="26" viewBox="0 0 26 26"><rect x="0.5" y="0.5" width="25" height="25" rx="6" fill="#f6f4ee"/><path d="M0.5 6.5 A6 6 0 0 1 6.5 0.5 H19.5 A6 6 0 0 1 25.5 6.5 V8 H0.5Z" fill="#f8d03a"/><path d="M3 13h20M3 18h20" stroke="#e0ddd4" stroke-width="0.8"/></svg>
<svg class="abs" style="left:695px;top:727px" width="26" height="26" viewBox="0 0 26 26"><rect x="0.5" y="0.5" width="25" height="25" rx="6" fill="#161616"/><text x="13" y="17" font-family="Liberation Sans" font-size="10" font-weight="bold" fill="#fff" text-anchor="middle">tv</text><circle cx="6.5" cy="13" r="2.5" fill="#fff"/></svg>
<svg class="abs" style="left:728px;top:727px" width="26" height="26" viewBox="0 0 26 26"><defs><linearGradient id="mg" x1="0" y1="0" x2="0" y2="1"><stop offset="0" stop-color="#fa5a6e"/><stop offset="1" stop-color="#f0243c"/></linearGradient></defs><rect x="0.5" y="0.5" width="25" height="25" rx="6" fill="url(#mg)"/><path d="M10 18 V7 L18 5.5 V16" fill="none" stroke="#fff" stroke-width="1.8"/><circle cx="8.3" cy="18.5" r="2.4" fill="#fff"/><circle cx="16.3" cy="16.5" r="2.4" fill="#fff"/></svg>
<svg class="abs" style="left:761px;top:727px" width="26" height="26" viewBox="0 0 26 26"><defs><linearGradient id="pg" x1="0" y1="0" x2="0" y2="1"><stop offset="0" stop-color="#c46af0"/><stop offset="1" stop-color="#8a3ad0"/></linearGradient></defs><rect x="0.5" y="0.5" width="25" height="25" rx="6" fill="url(#pg)"/><circle cx="13" cy="11.5" r="7.5" fill="none" stroke="#fff" stroke-width="1.5"/><circle cx="13" cy="11" r="2.4" fill="#fff"/><rect x="11.8" y="14" width="2.4" height="7" rx="1.2" fill="#fff"/></svg>
<svg class="abs" style="left:794px;top:727px" width="26" height="26" viewBox="0 0 26 26"><defs><linearGradient id="ag" x1="0" y1="0" x2="0" y2="1"><stop offset="0" stop-color="#1ab0fa"/><stop offset="1" stop-color="#1a6ef0"/></linearGradient></defs><rect x="0.5" y="0.5" width="25" height="25" rx="6" fill="url(#ag)"/><path d="M9 20 L15 6 M17 20 L11 6 M6 16 H20" stroke="#fff" stroke-width="1.8" stroke-linecap="round"/></svg>
<svg class="abs" style="left:827px;top:727px" width="26" height="26" viewBox="0 0 26 26"><rect x="0.5" y="0.5" width="25" height="25" rx="6" fill="#9a9a9a"/><circle cx="13" cy="13" r="10" fill="#6a6a6a"/><circle cx="13" cy="13" r="7.5" fill="#a8a8a8" stroke="#4a4a4a" stroke-width="1.2"/><circle cx="13" cy="13" r="2.5" fill="#555"/><path d="M13 5.5 V10.5 M6.5 17 L10.8 14.3 M19.5 17 L15.2 14.3" stroke="#555" stroke-width="1.3"/></svg><div class="abs" style="left:838.5px;top:757.5px;width:3px;height:3px;border-radius:2px;background:#1a1a1a"></div>
<div class="abs" style="left:843px;top:723px;width:12px;height:12px;border-radius:6px;background:#f03a36;color:#fff;font-size:8.5px;line-height:12px;text-align:center">1</div>
<svg class="abs" style="left:860px;top:727px" width="26" height="26" viewBox="0 0 26 26"><rect x="0.5" y="0.5" width="25" height="25" rx="6" fill="#0e8ef2"/><circle cx="13" cy="13" r="9.5" fill="#fff"/><path d="M5.5 13 L9.5 9.5 V11.8 H16.5 V9.5 L20.5 13 L16.5 16.5 V14.2 H9.5 V16.5Z" fill="#0e6ee0"/></svg><div class="abs" style="left:871.5px;top:757.5px;width:3px;height:3px;border-radius:2px;background:#1a1a1a"></div>
<svg class="abs" style="left:893px;top:727px" width="26" height="26" viewBox="0 0 26 26"><path d="M2 3 L18 1 L22 24 L5 26Z" fill="#f6f6f0" stroke="#bbb" stroke-width="0.5"/><path d="M6 7h9M6 10h10M6 13h8" stroke="#999" stroke-width="0.7"/><path d="M23 3 L11 21 L10 24 L13 22 L25 5Z" fill="#3a7ad8"/><rect x="1" y="14" width="4" height="10" fill="#e8a030"/></svg><div class="abs" style="left:904.5px;top:757.5px;width:3px;height:3px;border-radius:2px;background:#1a1a1a"></div>
<svg class="abs" style="left:926px;top:727px" width="26" height="26" viewBox="0 0 26 26"><rect x="0.5" y="0.5" width="25" height="25" rx="6" fill="#f2f2f2"/><path d="M13 2 V8 M8 6 C8 12 6 14 4 17 M18 6 C18 12 20 14 22 17" fill="none" stroke="#777" stroke-width="1.2"/><circle cx="13" cy="8" r="1.8" fill="#777"/><rect x="7" y="16" width="12" height="7" rx="1" fill="#333"/><path d="M8 18.5h10M8 20.5h10" stroke="#bbb" stroke-width="0.6"/></svg><div class="abs" style="left:937.5px;top:757.5px;width:3px;height:3px;border-radius:2px;background:#1a1a1a"></div>
<div class="abs" style="left:963px;top:727px;width:1px;height:26px;background:#6e5a8c"></div>
<svg class="abs" style="left:974px;top:727px" width="26" height="26" viewBox="0 0 26 26"><path d="M5 1 H16 L21 6 V25 H5Z" fill="#f8f8f8" stroke="#ccc" stroke-width="0.6"/><circle cx="13" cy="14" r="5.5" fill="#2a8cf2"/><path d="M16 11 L14 14.5 L10 17 L12 13.5Z" fill="#fff"/></svg>
<svg class="abs" style="left:1007px;top:727px" width="26" height="26" viewBox="0 0 26 26"><rect x="0" y="5" width="26" height="16" fill="#f4f4f4" stroke="#bbb" stroke-width="0.5"/><rect x="0" y="5" width="26" height="2.5" fill="#cfd6e0"/><rect x="2" y="9" width="7" height="10" fill="#e0e4ea"/><circle cx="21" cy="20" r="4.5" fill="#0e8ef2"/><path d="M18 20 L20 18.5 V21.5Z M24 20 L22 18.5 V21.5Z" fill="#fff"/></svg>
<svg class="abs" style="left:1040px;top:727px" width="26" height="26" viewBox="0 0 26 26"><path d="M4 3 H22 L20 25 H6Z" fill="#e6e6ea" stroke="#c8c8cc" stroke-width="0.8"/><ellipse cx="13" cy="3.5" rx="9" ry="2" fill="#f4f4f6" stroke="#c8c8cc" stroke-width="0.6"/></svg>
</body></html>
